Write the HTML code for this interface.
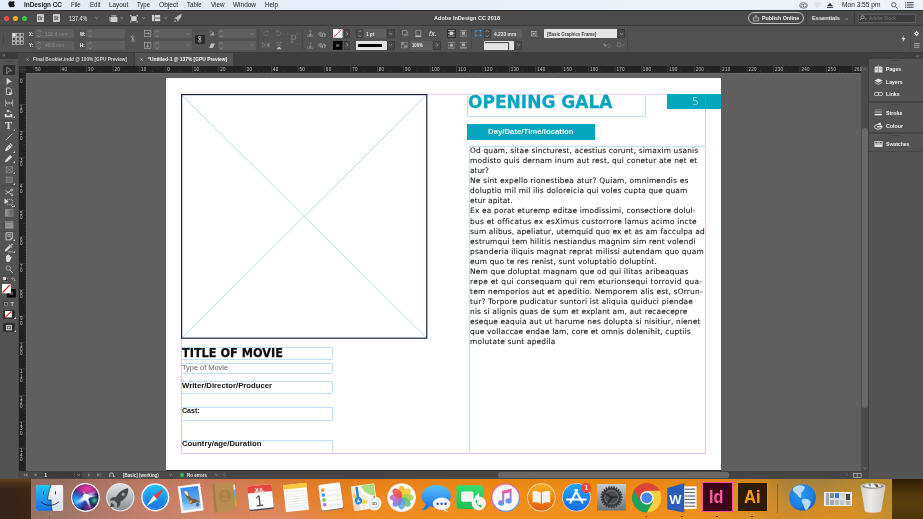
<!DOCTYPE html>
<html lang="en"><head><meta charset="utf-8"><title>InDesign CC - Untitled-1</title>
<style>
html,body{margin:0;padding:0;background:#2b1a0c;}
#root{position:relative;width:923px;height:519px;overflow:hidden;background:#535353;font-family:'Liberation Sans',sans-serif;will-change:transform;transform:translateZ(0);}
#root div,#root span,#root svg{box-sizing:border-box;}
svg{position:absolute;overflow:visible;}
</style></head><body><div id="root">
<div style="position:absolute;left:0px;top:478px;width:923px;height:41px;background:linear-gradient(90deg,#2e1c0e 0%,#3a2410 3%,#4a2f14 100%);"></div>
<div style="position:absolute;left:0px;top:0px;width:923px;height:10.4px;background:linear-gradient(90deg,#e3ebf8 0%,#e6edf8 40%,#edf1f8 70%,#eef2f9 100%);"></div>
<div style="position:absolute;left:0px;top:10.2px;width:923px;height:0.8px;background:#2c2c2c;"></div>
<div style="position:absolute;left:0px;top:10.8px;width:923px;height:14.4px;background:#4b4b4b;"></div>
<div style="position:absolute;left:0px;top:25px;width:923px;height:0.9px;background:#3a3a3a;"></div>
<div style="position:absolute;left:0px;top:25.8px;width:923px;height:26.4px;background:#525252;"></div>
<div style="position:absolute;left:0px;top:52px;width:923px;height:0.8px;background:#3c3c3c;"></div>
<div style="position:absolute;left:0px;top:52.6px;width:923px;height:13.6px;background:#3e3e3e;"></div>
<div style="position:absolute;left:19px;top:66px;width:850px;height:406px;background:#5f5f5f;"></div>
<div style="position:absolute;left:166px;top:78.3px;width:555px;height:391.3px;background:#fff;"></div>
<div style="position:absolute;left:166px;top:469.6px;width:555px;height:1.2px;background:#2a2a2a;"></div>
<div style="position:absolute;left:181.4px;top:93.8px;width:524px;height:0.7px;background:#f3cef7;"></div>
<div style="position:absolute;left:181.4px;top:453px;width:524px;height:0.7px;background:#e8bef7;"></div>
<div style="position:absolute;left:181.2px;top:94px;width:0.7px;height:359.5px;background:#e8bef7;"></div>
<div style="position:absolute;left:705px;top:94px;width:0.7px;height:359.5px;background:#e8bef7;"></div>
<svg style="left:181.4px;top:94px" width="246.4" height="244.8" viewBox="0 0 246.4 244.8"><line x1="1" y1="1" x2="245.4" y2="243.8" stroke="#a6d4f6" stroke-width="0.8"/><line x1="245.4" y1="1" x2="1" y2="243.8" stroke="#a6d4f6" stroke-width="0.8"/><rect x="0.6" y="0.6" width="245.2" height="243.6" fill="none" stroke="#1c2548" stroke-width="1.2"/></svg>
<div style="position:absolute;left:181.8px;top:346.75px;width:150.5px;height:0.7px;background:#c0e0f9;"></div>
<div style="position:absolute;left:181.8px;top:358.84999999999997px;width:150.5px;height:0.7px;background:#c0e0f9;"></div>
<div style="position:absolute;left:331.95px;top:347.1px;width:0.7px;height:12.099999999999966px;background:#c0e0f9;"></div>
<div style="position:absolute;left:181.8px;top:362.75px;width:150.5px;height:0.7px;background:#c0e0f9;"></div>
<div style="position:absolute;left:181.8px;top:373.04999999999995px;width:150.5px;height:0.7px;background:#c0e0f9;"></div>
<div style="position:absolute;left:331.95px;top:363.1px;width:0.7px;height:10.299999999999955px;background:#c0e0f9;"></div>
<div style="position:absolute;left:181.8px;top:380.75px;width:150.5px;height:0.7px;background:#c0e0f9;"></div>
<div style="position:absolute;left:181.8px;top:393.04999999999995px;width:150.5px;height:0.7px;background:#c0e0f9;"></div>
<div style="position:absolute;left:331.95px;top:381.1px;width:0.7px;height:12.299999999999955px;background:#c0e0f9;"></div>
<div style="position:absolute;left:181.8px;top:406.75px;width:150.5px;height:0.7px;background:#c0e0f9;"></div>
<div style="position:absolute;left:181.8px;top:419.75px;width:150.5px;height:0.7px;background:#c0e0f9;"></div>
<div style="position:absolute;left:331.95px;top:407.1px;width:0.7px;height:13.0px;background:#c0e0f9;"></div>
<div style="position:absolute;left:181.8px;top:439.84999999999997px;width:150.5px;height:0.7px;background:#c0e0f9;"></div>
<div style="position:absolute;left:331.95px;top:440.2px;width:0.7px;height:12.800000000000011px;background:#c0e0f9;"></div>
<div style="position:absolute;left:467.3px;top:115.65px;width:178.40000000000003px;height:0.7px;background:#c0e0f9;"></div>
<div style="position:absolute;left:466.95px;top:94.4px;width:0.7px;height:21.599999999999994px;background:#c0e0f9;"></div>
<div style="position:absolute;left:645.35px;top:94.4px;width:0.7px;height:21.599999999999994px;background:#c0e0f9;"></div>
<div style="position:absolute;left:469.5px;top:145.85px;width:235.70000000000005px;height:0.7px;background:#c0e0f9;"></div>
<div style="position:absolute;left:469.15px;top:146.2px;width:0.7px;height:306.8px;background:#c0e0f9;"></div>
<div style="position:absolute;left:467.2px;top:124.2px;width:127.4px;height:15.4px;background:#06a6be;"></div>
<div style="position:absolute;left:667px;top:94px;width:54px;height:14.7px;background:#06a6be;"></div>
<div style="position:absolute;left:705px;top:94px;width:0.7px;height:14.7px;background:#3f92d6;"></div>
<div style="position:absolute;left:19px;top:66px;width:842.3px;height:7px;background:#222222;"></div>
<div style="position:absolute;left:19px;top:72.8px;width:842.3px;height:0.8px;background:#6a6a6a;"></div>
<div style="position:absolute;left:19px;top:66px;width:6.7px;height:405.4px;background:#222222;"></div>
<div style="position:absolute;left:25.7px;top:73px;width:0.7px;height:398.4px;background:#6a6a6a;"></div>
<div style="position:absolute;left:19px;top:66px;width:6.7px;height:7px;background:#2a2a2a;"></div>
<div style="position:absolute;left:19.5px;top:69.3px;width:6px;height:0.5px;background:#3c3c3c;"></div>
<div style="position:absolute;left:22.2px;top:66.5px;width:0.5px;height:6.2px;background:#3c3c3c;"></div>
<svg style="left:0;top:0" width="923" height="519" viewBox="0 0 923 519"><rect x="33.45" y="66" width="0.7" height="6.8" fill="#4c4c4c"/><rect x="36.14" y="71.80" width="0.6" height="1.0" fill="#484848"/><rect x="38.78" y="71.80" width="0.6" height="1.0" fill="#484848"/><rect x="41.43" y="71.80" width="0.6" height="1.0" fill="#484848"/><rect x="44.07" y="71.80" width="0.6" height="1.0" fill="#484848"/><rect x="46.71" y="70.60" width="0.6" height="2.2" fill="#484848"/><rect x="49.35" y="71.80" width="0.6" height="1.0" fill="#484848"/><rect x="51.99" y="71.80" width="0.6" height="1.0" fill="#484848"/><rect x="54.64" y="71.80" width="0.6" height="1.0" fill="#484848"/><rect x="57.28" y="71.80" width="0.6" height="1.0" fill="#484848"/><rect x="59.87" y="66" width="0.7" height="6.8" fill="#4c4c4c"/><rect x="62.56" y="71.80" width="0.6" height="1.0" fill="#484848"/><rect x="65.20" y="71.80" width="0.6" height="1.0" fill="#484848"/><rect x="67.85" y="71.80" width="0.6" height="1.0" fill="#484848"/><rect x="70.49" y="71.80" width="0.6" height="1.0" fill="#484848"/><rect x="73.13" y="70.60" width="0.6" height="2.2" fill="#484848"/><rect x="75.77" y="71.80" width="0.6" height="1.0" fill="#484848"/><rect x="78.41" y="71.80" width="0.6" height="1.0" fill="#484848"/><rect x="81.06" y="71.80" width="0.6" height="1.0" fill="#484848"/><rect x="83.70" y="71.80" width="0.6" height="1.0" fill="#484848"/><rect x="86.29" y="66" width="0.7" height="6.8" fill="#4c4c4c"/><rect x="88.98" y="71.80" width="0.6" height="1.0" fill="#484848"/><rect x="91.62" y="71.80" width="0.6" height="1.0" fill="#484848"/><rect x="94.27" y="71.80" width="0.6" height="1.0" fill="#484848"/><rect x="96.91" y="71.80" width="0.6" height="1.0" fill="#484848"/><rect x="99.55" y="70.60" width="0.6" height="2.2" fill="#484848"/><rect x="102.19" y="71.80" width="0.6" height="1.0" fill="#484848"/><rect x="104.83" y="71.80" width="0.6" height="1.0" fill="#484848"/><rect x="107.48" y="71.80" width="0.6" height="1.0" fill="#484848"/><rect x="110.12" y="71.80" width="0.6" height="1.0" fill="#484848"/><rect x="112.71" y="66" width="0.7" height="6.8" fill="#4c4c4c"/><rect x="115.40" y="71.80" width="0.6" height="1.0" fill="#484848"/><rect x="118.04" y="71.80" width="0.6" height="1.0" fill="#484848"/><rect x="120.69" y="71.80" width="0.6" height="1.0" fill="#484848"/><rect x="123.33" y="71.80" width="0.6" height="1.0" fill="#484848"/><rect x="125.97" y="70.60" width="0.6" height="2.2" fill="#484848"/><rect x="128.61" y="71.80" width="0.6" height="1.0" fill="#484848"/><rect x="131.25" y="71.80" width="0.6" height="1.0" fill="#484848"/><rect x="133.90" y="71.80" width="0.6" height="1.0" fill="#484848"/><rect x="136.54" y="71.80" width="0.6" height="1.0" fill="#484848"/><rect x="139.13" y="66" width="0.7" height="6.8" fill="#4c4c4c"/><rect x="141.82" y="71.80" width="0.6" height="1.0" fill="#484848"/><rect x="144.46" y="71.80" width="0.6" height="1.0" fill="#484848"/><rect x="147.11" y="71.80" width="0.6" height="1.0" fill="#484848"/><rect x="149.75" y="71.80" width="0.6" height="1.0" fill="#484848"/><rect x="152.39" y="70.60" width="0.6" height="2.2" fill="#484848"/><rect x="155.03" y="71.80" width="0.6" height="1.0" fill="#484848"/><rect x="157.67" y="71.80" width="0.6" height="1.0" fill="#484848"/><rect x="160.32" y="71.80" width="0.6" height="1.0" fill="#484848"/><rect x="162.96" y="71.80" width="0.6" height="1.0" fill="#484848"/><rect x="165.55" y="66" width="0.7" height="6.8" fill="#4c4c4c"/><rect x="168.24" y="71.80" width="0.6" height="1.0" fill="#484848"/><rect x="170.88" y="71.80" width="0.6" height="1.0" fill="#484848"/><rect x="173.53" y="71.80" width="0.6" height="1.0" fill="#484848"/><rect x="176.17" y="71.80" width="0.6" height="1.0" fill="#484848"/><rect x="178.81" y="70.60" width="0.6" height="2.2" fill="#484848"/><rect x="181.45" y="71.80" width="0.6" height="1.0" fill="#484848"/><rect x="184.09" y="71.80" width="0.6" height="1.0" fill="#484848"/><rect x="186.74" y="71.80" width="0.6" height="1.0" fill="#484848"/><rect x="189.38" y="71.80" width="0.6" height="1.0" fill="#484848"/><rect x="191.97" y="66" width="0.7" height="6.8" fill="#4c4c4c"/><rect x="194.66" y="71.80" width="0.6" height="1.0" fill="#484848"/><rect x="197.30" y="71.80" width="0.6" height="1.0" fill="#484848"/><rect x="199.95" y="71.80" width="0.6" height="1.0" fill="#484848"/><rect x="202.59" y="71.80" width="0.6" height="1.0" fill="#484848"/><rect x="205.23" y="70.60" width="0.6" height="2.2" fill="#484848"/><rect x="207.87" y="71.80" width="0.6" height="1.0" fill="#484848"/><rect x="210.51" y="71.80" width="0.6" height="1.0" fill="#484848"/><rect x="213.16" y="71.80" width="0.6" height="1.0" fill="#484848"/><rect x="215.80" y="71.80" width="0.6" height="1.0" fill="#484848"/><rect x="218.39" y="66" width="0.7" height="6.8" fill="#4c4c4c"/><rect x="221.08" y="71.80" width="0.6" height="1.0" fill="#484848"/><rect x="223.72" y="71.80" width="0.6" height="1.0" fill="#484848"/><rect x="226.37" y="71.80" width="0.6" height="1.0" fill="#484848"/><rect x="229.01" y="71.80" width="0.6" height="1.0" fill="#484848"/><rect x="231.65" y="70.60" width="0.6" height="2.2" fill="#484848"/><rect x="234.29" y="71.80" width="0.6" height="1.0" fill="#484848"/><rect x="236.93" y="71.80" width="0.6" height="1.0" fill="#484848"/><rect x="239.58" y="71.80" width="0.6" height="1.0" fill="#484848"/><rect x="242.22" y="71.80" width="0.6" height="1.0" fill="#484848"/><rect x="244.81" y="66" width="0.7" height="6.8" fill="#4c4c4c"/><rect x="247.50" y="71.80" width="0.6" height="1.0" fill="#484848"/><rect x="250.14" y="71.80" width="0.6" height="1.0" fill="#484848"/><rect x="252.79" y="71.80" width="0.6" height="1.0" fill="#484848"/><rect x="255.43" y="71.80" width="0.6" height="1.0" fill="#484848"/><rect x="258.07" y="70.60" width="0.6" height="2.2" fill="#484848"/><rect x="260.71" y="71.80" width="0.6" height="1.0" fill="#484848"/><rect x="263.35" y="71.80" width="0.6" height="1.0" fill="#484848"/><rect x="266.00" y="71.80" width="0.6" height="1.0" fill="#484848"/><rect x="268.64" y="71.80" width="0.6" height="1.0" fill="#484848"/><rect x="271.23" y="66" width="0.7" height="6.8" fill="#4c4c4c"/><rect x="273.92" y="71.80" width="0.6" height="1.0" fill="#484848"/><rect x="276.56" y="71.80" width="0.6" height="1.0" fill="#484848"/><rect x="279.21" y="71.80" width="0.6" height="1.0" fill="#484848"/><rect x="281.85" y="71.80" width="0.6" height="1.0" fill="#484848"/><rect x="284.49" y="70.60" width="0.6" height="2.2" fill="#484848"/><rect x="287.13" y="71.80" width="0.6" height="1.0" fill="#484848"/><rect x="289.77" y="71.80" width="0.6" height="1.0" fill="#484848"/><rect x="292.42" y="71.80" width="0.6" height="1.0" fill="#484848"/><rect x="295.06" y="71.80" width="0.6" height="1.0" fill="#484848"/><rect x="297.65" y="66" width="0.7" height="6.8" fill="#4c4c4c"/><rect x="300.34" y="71.80" width="0.6" height="1.0" fill="#484848"/><rect x="302.98" y="71.80" width="0.6" height="1.0" fill="#484848"/><rect x="305.63" y="71.80" width="0.6" height="1.0" fill="#484848"/><rect x="308.27" y="71.80" width="0.6" height="1.0" fill="#484848"/><rect x="310.91" y="70.60" width="0.6" height="2.2" fill="#484848"/><rect x="313.55" y="71.80" width="0.6" height="1.0" fill="#484848"/><rect x="316.19" y="71.80" width="0.6" height="1.0" fill="#484848"/><rect x="318.84" y="71.80" width="0.6" height="1.0" fill="#484848"/><rect x="321.48" y="71.80" width="0.6" height="1.0" fill="#484848"/><rect x="324.07" y="66" width="0.7" height="6.8" fill="#4c4c4c"/><rect x="326.76" y="71.80" width="0.6" height="1.0" fill="#484848"/><rect x="329.40" y="71.80" width="0.6" height="1.0" fill="#484848"/><rect x="332.05" y="71.80" width="0.6" height="1.0" fill="#484848"/><rect x="334.69" y="71.80" width="0.6" height="1.0" fill="#484848"/><rect x="337.33" y="70.60" width="0.6" height="2.2" fill="#484848"/><rect x="339.97" y="71.80" width="0.6" height="1.0" fill="#484848"/><rect x="342.61" y="71.80" width="0.6" height="1.0" fill="#484848"/><rect x="345.26" y="71.80" width="0.6" height="1.0" fill="#484848"/><rect x="347.90" y="71.80" width="0.6" height="1.0" fill="#484848"/><rect x="350.49" y="66" width="0.7" height="6.8" fill="#4c4c4c"/><rect x="353.18" y="71.80" width="0.6" height="1.0" fill="#484848"/><rect x="355.82" y="71.80" width="0.6" height="1.0" fill="#484848"/><rect x="358.47" y="71.80" width="0.6" height="1.0" fill="#484848"/><rect x="361.11" y="71.80" width="0.6" height="1.0" fill="#484848"/><rect x="363.75" y="70.60" width="0.6" height="2.2" fill="#484848"/><rect x="366.39" y="71.80" width="0.6" height="1.0" fill="#484848"/><rect x="369.03" y="71.80" width="0.6" height="1.0" fill="#484848"/><rect x="371.68" y="71.80" width="0.6" height="1.0" fill="#484848"/><rect x="374.32" y="71.80" width="0.6" height="1.0" fill="#484848"/><rect x="376.91" y="66" width="0.7" height="6.8" fill="#4c4c4c"/><rect x="379.60" y="71.80" width="0.6" height="1.0" fill="#484848"/><rect x="382.24" y="71.80" width="0.6" height="1.0" fill="#484848"/><rect x="384.89" y="71.80" width="0.6" height="1.0" fill="#484848"/><rect x="387.53" y="71.80" width="0.6" height="1.0" fill="#484848"/><rect x="390.17" y="70.60" width="0.6" height="2.2" fill="#484848"/><rect x="392.81" y="71.80" width="0.6" height="1.0" fill="#484848"/><rect x="395.45" y="71.80" width="0.6" height="1.0" fill="#484848"/><rect x="398.10" y="71.80" width="0.6" height="1.0" fill="#484848"/><rect x="400.74" y="71.80" width="0.6" height="1.0" fill="#484848"/><rect x="403.33" y="66" width="0.7" height="6.8" fill="#4c4c4c"/><rect x="406.02" y="71.80" width="0.6" height="1.0" fill="#484848"/><rect x="408.66" y="71.80" width="0.6" height="1.0" fill="#484848"/><rect x="411.31" y="71.80" width="0.6" height="1.0" fill="#484848"/><rect x="413.95" y="71.80" width="0.6" height="1.0" fill="#484848"/><rect x="416.59" y="70.60" width="0.6" height="2.2" fill="#484848"/><rect x="419.23" y="71.80" width="0.6" height="1.0" fill="#484848"/><rect x="421.87" y="71.80" width="0.6" height="1.0" fill="#484848"/><rect x="424.52" y="71.80" width="0.6" height="1.0" fill="#484848"/><rect x="427.16" y="71.80" width="0.6" height="1.0" fill="#484848"/><rect x="429.75" y="66" width="0.7" height="6.8" fill="#4c4c4c"/><rect x="432.44" y="71.80" width="0.6" height="1.0" fill="#484848"/><rect x="435.08" y="71.80" width="0.6" height="1.0" fill="#484848"/><rect x="437.73" y="71.80" width="0.6" height="1.0" fill="#484848"/><rect x="440.37" y="71.80" width="0.6" height="1.0" fill="#484848"/><rect x="443.01" y="70.60" width="0.6" height="2.2" fill="#484848"/><rect x="445.65" y="71.80" width="0.6" height="1.0" fill="#484848"/><rect x="448.29" y="71.80" width="0.6" height="1.0" fill="#484848"/><rect x="450.94" y="71.80" width="0.6" height="1.0" fill="#484848"/><rect x="453.58" y="71.80" width="0.6" height="1.0" fill="#484848"/><rect x="456.17" y="66" width="0.7" height="6.8" fill="#4c4c4c"/><rect x="458.86" y="71.80" width="0.6" height="1.0" fill="#484848"/><rect x="461.50" y="71.80" width="0.6" height="1.0" fill="#484848"/><rect x="464.15" y="71.80" width="0.6" height="1.0" fill="#484848"/><rect x="466.79" y="71.80" width="0.6" height="1.0" fill="#484848"/><rect x="469.43" y="70.60" width="0.6" height="2.2" fill="#484848"/><rect x="472.07" y="71.80" width="0.6" height="1.0" fill="#484848"/><rect x="474.71" y="71.80" width="0.6" height="1.0" fill="#484848"/><rect x="477.36" y="71.80" width="0.6" height="1.0" fill="#484848"/><rect x="480.00" y="71.80" width="0.6" height="1.0" fill="#484848"/><rect x="482.59" y="66" width="0.7" height="6.8" fill="#4c4c4c"/><rect x="485.28" y="71.80" width="0.6" height="1.0" fill="#484848"/><rect x="487.92" y="71.80" width="0.6" height="1.0" fill="#484848"/><rect x="490.57" y="71.80" width="0.6" height="1.0" fill="#484848"/><rect x="493.21" y="71.80" width="0.6" height="1.0" fill="#484848"/><rect x="495.85" y="70.60" width="0.6" height="2.2" fill="#484848"/><rect x="498.49" y="71.80" width="0.6" height="1.0" fill="#484848"/><rect x="501.13" y="71.80" width="0.6" height="1.0" fill="#484848"/><rect x="503.78" y="71.80" width="0.6" height="1.0" fill="#484848"/><rect x="506.42" y="71.80" width="0.6" height="1.0" fill="#484848"/><rect x="509.01" y="66" width="0.7" height="6.8" fill="#4c4c4c"/><rect x="511.70" y="71.80" width="0.6" height="1.0" fill="#484848"/><rect x="514.34" y="71.80" width="0.6" height="1.0" fill="#484848"/><rect x="516.99" y="71.80" width="0.6" height="1.0" fill="#484848"/><rect x="519.63" y="71.80" width="0.6" height="1.0" fill="#484848"/><rect x="522.27" y="70.60" width="0.6" height="2.2" fill="#484848"/><rect x="524.91" y="71.80" width="0.6" height="1.0" fill="#484848"/><rect x="527.55" y="71.80" width="0.6" height="1.0" fill="#484848"/><rect x="530.20" y="71.80" width="0.6" height="1.0" fill="#484848"/><rect x="532.84" y="71.80" width="0.6" height="1.0" fill="#484848"/><rect x="535.43" y="66" width="0.7" height="6.8" fill="#4c4c4c"/><rect x="538.12" y="71.80" width="0.6" height="1.0" fill="#484848"/><rect x="540.76" y="71.80" width="0.6" height="1.0" fill="#484848"/><rect x="543.41" y="71.80" width="0.6" height="1.0" fill="#484848"/><rect x="546.05" y="71.80" width="0.6" height="1.0" fill="#484848"/><rect x="548.69" y="70.60" width="0.6" height="2.2" fill="#484848"/><rect x="551.33" y="71.80" width="0.6" height="1.0" fill="#484848"/><rect x="553.97" y="71.80" width="0.6" height="1.0" fill="#484848"/><rect x="556.62" y="71.80" width="0.6" height="1.0" fill="#484848"/><rect x="559.26" y="71.80" width="0.6" height="1.0" fill="#484848"/><rect x="561.85" y="66" width="0.7" height="6.8" fill="#4c4c4c"/><rect x="564.54" y="71.80" width="0.6" height="1.0" fill="#484848"/><rect x="567.18" y="71.80" width="0.6" height="1.0" fill="#484848"/><rect x="569.83" y="71.80" width="0.6" height="1.0" fill="#484848"/><rect x="572.47" y="71.80" width="0.6" height="1.0" fill="#484848"/><rect x="575.11" y="70.60" width="0.6" height="2.2" fill="#484848"/><rect x="577.75" y="71.80" width="0.6" height="1.0" fill="#484848"/><rect x="580.39" y="71.80" width="0.6" height="1.0" fill="#484848"/><rect x="583.04" y="71.80" width="0.6" height="1.0" fill="#484848"/><rect x="585.68" y="71.80" width="0.6" height="1.0" fill="#484848"/><rect x="588.27" y="66" width="0.7" height="6.8" fill="#4c4c4c"/><rect x="590.96" y="71.80" width="0.6" height="1.0" fill="#484848"/><rect x="593.60" y="71.80" width="0.6" height="1.0" fill="#484848"/><rect x="596.25" y="71.80" width="0.6" height="1.0" fill="#484848"/><rect x="598.89" y="71.80" width="0.6" height="1.0" fill="#484848"/><rect x="601.53" y="70.60" width="0.6" height="2.2" fill="#484848"/><rect x="604.17" y="71.80" width="0.6" height="1.0" fill="#484848"/><rect x="606.81" y="71.80" width="0.6" height="1.0" fill="#484848"/><rect x="609.46" y="71.80" width="0.6" height="1.0" fill="#484848"/><rect x="612.10" y="71.80" width="0.6" height="1.0" fill="#484848"/><rect x="614.69" y="66" width="0.7" height="6.8" fill="#4c4c4c"/><rect x="617.38" y="71.80" width="0.6" height="1.0" fill="#484848"/><rect x="620.02" y="71.80" width="0.6" height="1.0" fill="#484848"/><rect x="622.67" y="71.80" width="0.6" height="1.0" fill="#484848"/><rect x="625.31" y="71.80" width="0.6" height="1.0" fill="#484848"/><rect x="627.95" y="70.60" width="0.6" height="2.2" fill="#484848"/><rect x="630.59" y="71.80" width="0.6" height="1.0" fill="#484848"/><rect x="633.23" y="71.80" width="0.6" height="1.0" fill="#484848"/><rect x="635.88" y="71.80" width="0.6" height="1.0" fill="#484848"/><rect x="638.52" y="71.80" width="0.6" height="1.0" fill="#484848"/><rect x="641.11" y="66" width="0.7" height="6.8" fill="#4c4c4c"/><rect x="643.80" y="71.80" width="0.6" height="1.0" fill="#484848"/><rect x="646.44" y="71.80" width="0.6" height="1.0" fill="#484848"/><rect x="649.09" y="71.80" width="0.6" height="1.0" fill="#484848"/><rect x="651.73" y="71.80" width="0.6" height="1.0" fill="#484848"/><rect x="654.37" y="70.60" width="0.6" height="2.2" fill="#484848"/><rect x="657.01" y="71.80" width="0.6" height="1.0" fill="#484848"/><rect x="659.65" y="71.80" width="0.6" height="1.0" fill="#484848"/><rect x="662.30" y="71.80" width="0.6" height="1.0" fill="#484848"/><rect x="664.94" y="71.80" width="0.6" height="1.0" fill="#484848"/><rect x="667.53" y="66" width="0.7" height="6.8" fill="#4c4c4c"/><rect x="670.22" y="71.80" width="0.6" height="1.0" fill="#484848"/><rect x="672.86" y="71.80" width="0.6" height="1.0" fill="#484848"/><rect x="675.51" y="71.80" width="0.6" height="1.0" fill="#484848"/><rect x="678.15" y="71.80" width="0.6" height="1.0" fill="#484848"/><rect x="680.79" y="70.60" width="0.6" height="2.2" fill="#484848"/><rect x="683.43" y="71.80" width="0.6" height="1.0" fill="#484848"/><rect x="686.07" y="71.80" width="0.6" height="1.0" fill="#484848"/><rect x="688.72" y="71.80" width="0.6" height="1.0" fill="#484848"/><rect x="691.36" y="71.80" width="0.6" height="1.0" fill="#484848"/><rect x="693.95" y="66" width="0.7" height="6.8" fill="#4c4c4c"/><rect x="696.64" y="71.80" width="0.6" height="1.0" fill="#484848"/><rect x="699.28" y="71.80" width="0.6" height="1.0" fill="#484848"/><rect x="701.93" y="71.80" width="0.6" height="1.0" fill="#484848"/><rect x="704.57" y="71.80" width="0.6" height="1.0" fill="#484848"/><rect x="707.21" y="70.60" width="0.6" height="2.2" fill="#484848"/><rect x="709.85" y="71.80" width="0.6" height="1.0" fill="#484848"/><rect x="712.49" y="71.80" width="0.6" height="1.0" fill="#484848"/><rect x="715.14" y="71.80" width="0.6" height="1.0" fill="#484848"/><rect x="717.78" y="71.80" width="0.6" height="1.0" fill="#484848"/><rect x="720.37" y="66" width="0.7" height="6.8" fill="#4c4c4c"/><rect x="723.06" y="71.80" width="0.6" height="1.0" fill="#484848"/><rect x="725.70" y="71.80" width="0.6" height="1.0" fill="#484848"/><rect x="728.35" y="71.80" width="0.6" height="1.0" fill="#484848"/><rect x="730.99" y="71.80" width="0.6" height="1.0" fill="#484848"/><rect x="733.63" y="70.60" width="0.6" height="2.2" fill="#484848"/><rect x="736.27" y="71.80" width="0.6" height="1.0" fill="#484848"/><rect x="738.91" y="71.80" width="0.6" height="1.0" fill="#484848"/><rect x="741.56" y="71.80" width="0.6" height="1.0" fill="#484848"/><rect x="744.20" y="71.80" width="0.6" height="1.0" fill="#484848"/><rect x="746.79" y="66" width="0.7" height="6.8" fill="#4c4c4c"/><rect x="749.48" y="71.80" width="0.6" height="1.0" fill="#484848"/><rect x="752.12" y="71.80" width="0.6" height="1.0" fill="#484848"/><rect x="754.77" y="71.80" width="0.6" height="1.0" fill="#484848"/><rect x="757.41" y="71.80" width="0.6" height="1.0" fill="#484848"/><rect x="760.05" y="70.60" width="0.6" height="2.2" fill="#484848"/><rect x="762.69" y="71.80" width="0.6" height="1.0" fill="#484848"/><rect x="765.33" y="71.80" width="0.6" height="1.0" fill="#484848"/><rect x="767.98" y="71.80" width="0.6" height="1.0" fill="#484848"/><rect x="770.62" y="71.80" width="0.6" height="1.0" fill="#484848"/><rect x="773.21" y="66" width="0.7" height="6.8" fill="#4c4c4c"/><rect x="775.90" y="71.80" width="0.6" height="1.0" fill="#484848"/><rect x="778.54" y="71.80" width="0.6" height="1.0" fill="#484848"/><rect x="781.19" y="71.80" width="0.6" height="1.0" fill="#484848"/><rect x="783.83" y="71.80" width="0.6" height="1.0" fill="#484848"/><rect x="786.47" y="70.60" width="0.6" height="2.2" fill="#484848"/><rect x="789.11" y="71.80" width="0.6" height="1.0" fill="#484848"/><rect x="791.75" y="71.80" width="0.6" height="1.0" fill="#484848"/><rect x="794.40" y="71.80" width="0.6" height="1.0" fill="#484848"/><rect x="797.04" y="71.80" width="0.6" height="1.0" fill="#484848"/><rect x="799.63" y="66" width="0.7" height="6.8" fill="#4c4c4c"/><rect x="802.32" y="71.80" width="0.6" height="1.0" fill="#484848"/><rect x="804.96" y="71.80" width="0.6" height="1.0" fill="#484848"/><rect x="807.61" y="71.80" width="0.6" height="1.0" fill="#484848"/><rect x="810.25" y="71.80" width="0.6" height="1.0" fill="#484848"/><rect x="812.89" y="70.60" width="0.6" height="2.2" fill="#484848"/><rect x="815.53" y="71.80" width="0.6" height="1.0" fill="#484848"/><rect x="818.17" y="71.80" width="0.6" height="1.0" fill="#484848"/><rect x="820.82" y="71.80" width="0.6" height="1.0" fill="#484848"/><rect x="823.46" y="71.80" width="0.6" height="1.0" fill="#484848"/><rect x="826.05" y="66" width="0.7" height="6.8" fill="#4c4c4c"/><rect x="828.74" y="71.80" width="0.6" height="1.0" fill="#484848"/><rect x="831.38" y="71.80" width="0.6" height="1.0" fill="#484848"/><rect x="834.03" y="71.80" width="0.6" height="1.0" fill="#484848"/><rect x="836.67" y="71.80" width="0.6" height="1.0" fill="#484848"/><rect x="839.31" y="70.60" width="0.6" height="2.2" fill="#484848"/><rect x="841.95" y="71.80" width="0.6" height="1.0" fill="#484848"/><rect x="844.59" y="71.80" width="0.6" height="1.0" fill="#484848"/><rect x="847.24" y="71.80" width="0.6" height="1.0" fill="#484848"/><rect x="849.88" y="71.80" width="0.6" height="1.0" fill="#484848"/><rect x="852.47" y="66" width="0.7" height="6.8" fill="#4c4c4c"/><rect x="855.16" y="71.80" width="0.6" height="1.0" fill="#484848"/><rect x="857.80" y="71.80" width="0.6" height="1.0" fill="#484848"/><rect x="860.45" y="71.80" width="0.6" height="1.0" fill="#484848"/><rect x="24.40" y="75.36" width="1.0" height="0.6" fill="#484848"/><rect x="19" y="77.95" width="6.4" height="0.7" fill="#4c4c4c"/><rect x="24.40" y="80.64" width="1.0" height="0.6" fill="#484848"/><rect x="24.40" y="83.28" width="1.0" height="0.6" fill="#484848"/><rect x="24.40" y="85.93" width="1.0" height="0.6" fill="#484848"/><rect x="24.40" y="88.57" width="1.0" height="0.6" fill="#484848"/><rect x="23.20" y="91.21" width="2.2" height="0.6" fill="#484848"/><rect x="24.40" y="93.85" width="1.0" height="0.6" fill="#484848"/><rect x="24.40" y="96.49" width="1.0" height="0.6" fill="#484848"/><rect x="24.40" y="99.14" width="1.0" height="0.6" fill="#484848"/><rect x="24.40" y="101.78" width="1.0" height="0.6" fill="#484848"/><rect x="19" y="104.37" width="6.4" height="0.7" fill="#4c4c4c"/><rect x="24.40" y="107.06" width="1.0" height="0.6" fill="#484848"/><rect x="24.40" y="109.70" width="1.0" height="0.6" fill="#484848"/><rect x="24.40" y="112.35" width="1.0" height="0.6" fill="#484848"/><rect x="24.40" y="114.99" width="1.0" height="0.6" fill="#484848"/><rect x="23.20" y="117.63" width="2.2" height="0.6" fill="#484848"/><rect x="24.40" y="120.27" width="1.0" height="0.6" fill="#484848"/><rect x="24.40" y="122.91" width="1.0" height="0.6" fill="#484848"/><rect x="24.40" y="125.56" width="1.0" height="0.6" fill="#484848"/><rect x="24.40" y="128.20" width="1.0" height="0.6" fill="#484848"/><rect x="19" y="130.79" width="6.4" height="0.7" fill="#4c4c4c"/><rect x="24.40" y="133.48" width="1.0" height="0.6" fill="#484848"/><rect x="24.40" y="136.12" width="1.0" height="0.6" fill="#484848"/><rect x="24.40" y="138.77" width="1.0" height="0.6" fill="#484848"/><rect x="24.40" y="141.41" width="1.0" height="0.6" fill="#484848"/><rect x="23.20" y="144.05" width="2.2" height="0.6" fill="#484848"/><rect x="24.40" y="146.69" width="1.0" height="0.6" fill="#484848"/><rect x="24.40" y="149.33" width="1.0" height="0.6" fill="#484848"/><rect x="24.40" y="151.98" width="1.0" height="0.6" fill="#484848"/><rect x="24.40" y="154.62" width="1.0" height="0.6" fill="#484848"/><rect x="19" y="157.21" width="6.4" height="0.7" fill="#4c4c4c"/><rect x="24.40" y="159.90" width="1.0" height="0.6" fill="#484848"/><rect x="24.40" y="162.54" width="1.0" height="0.6" fill="#484848"/><rect x="24.40" y="165.19" width="1.0" height="0.6" fill="#484848"/><rect x="24.40" y="167.83" width="1.0" height="0.6" fill="#484848"/><rect x="23.20" y="170.47" width="2.2" height="0.6" fill="#484848"/><rect x="24.40" y="173.11" width="1.0" height="0.6" fill="#484848"/><rect x="24.40" y="175.75" width="1.0" height="0.6" fill="#484848"/><rect x="24.40" y="178.40" width="1.0" height="0.6" fill="#484848"/><rect x="24.40" y="181.04" width="1.0" height="0.6" fill="#484848"/><rect x="19" y="183.63" width="6.4" height="0.7" fill="#4c4c4c"/><rect x="24.40" y="186.32" width="1.0" height="0.6" fill="#484848"/><rect x="24.40" y="188.96" width="1.0" height="0.6" fill="#484848"/><rect x="24.40" y="191.61" width="1.0" height="0.6" fill="#484848"/><rect x="24.40" y="194.25" width="1.0" height="0.6" fill="#484848"/><rect x="23.20" y="196.89" width="2.2" height="0.6" fill="#484848"/><rect x="24.40" y="199.53" width="1.0" height="0.6" fill="#484848"/><rect x="24.40" y="202.17" width="1.0" height="0.6" fill="#484848"/><rect x="24.40" y="204.82" width="1.0" height="0.6" fill="#484848"/><rect x="24.40" y="207.46" width="1.0" height="0.6" fill="#484848"/><rect x="19" y="210.05" width="6.4" height="0.7" fill="#4c4c4c"/><rect x="24.40" y="212.74" width="1.0" height="0.6" fill="#484848"/><rect x="24.40" y="215.38" width="1.0" height="0.6" fill="#484848"/><rect x="24.40" y="218.03" width="1.0" height="0.6" fill="#484848"/><rect x="24.40" y="220.67" width="1.0" height="0.6" fill="#484848"/><rect x="23.20" y="223.31" width="2.2" height="0.6" fill="#484848"/><rect x="24.40" y="225.95" width="1.0" height="0.6" fill="#484848"/><rect x="24.40" y="228.59" width="1.0" height="0.6" fill="#484848"/><rect x="24.40" y="231.24" width="1.0" height="0.6" fill="#484848"/><rect x="24.40" y="233.88" width="1.0" height="0.6" fill="#484848"/><rect x="19" y="236.47" width="6.4" height="0.7" fill="#4c4c4c"/><rect x="24.40" y="239.16" width="1.0" height="0.6" fill="#484848"/><rect x="24.40" y="241.80" width="1.0" height="0.6" fill="#484848"/><rect x="24.40" y="244.45" width="1.0" height="0.6" fill="#484848"/><rect x="24.40" y="247.09" width="1.0" height="0.6" fill="#484848"/><rect x="23.20" y="249.73" width="2.2" height="0.6" fill="#484848"/><rect x="24.40" y="252.37" width="1.0" height="0.6" fill="#484848"/><rect x="24.40" y="255.01" width="1.0" height="0.6" fill="#484848"/><rect x="24.40" y="257.66" width="1.0" height="0.6" fill="#484848"/><rect x="24.40" y="260.30" width="1.0" height="0.6" fill="#484848"/><rect x="19" y="262.89" width="6.4" height="0.7" fill="#4c4c4c"/><rect x="24.40" y="265.58" width="1.0" height="0.6" fill="#484848"/><rect x="24.40" y="268.22" width="1.0" height="0.6" fill="#484848"/><rect x="24.40" y="270.87" width="1.0" height="0.6" fill="#484848"/><rect x="24.40" y="273.51" width="1.0" height="0.6" fill="#484848"/><rect x="23.20" y="276.15" width="2.2" height="0.6" fill="#484848"/><rect x="24.40" y="278.79" width="1.0" height="0.6" fill="#484848"/><rect x="24.40" y="281.43" width="1.0" height="0.6" fill="#484848"/><rect x="24.40" y="284.08" width="1.0" height="0.6" fill="#484848"/><rect x="24.40" y="286.72" width="1.0" height="0.6" fill="#484848"/><rect x="19" y="289.31" width="6.4" height="0.7" fill="#4c4c4c"/><rect x="24.40" y="292.00" width="1.0" height="0.6" fill="#484848"/><rect x="24.40" y="294.64" width="1.0" height="0.6" fill="#484848"/><rect x="24.40" y="297.29" width="1.0" height="0.6" fill="#484848"/><rect x="24.40" y="299.93" width="1.0" height="0.6" fill="#484848"/><rect x="23.20" y="302.57" width="2.2" height="0.6" fill="#484848"/><rect x="24.40" y="305.21" width="1.0" height="0.6" fill="#484848"/><rect x="24.40" y="307.85" width="1.0" height="0.6" fill="#484848"/><rect x="24.40" y="310.50" width="1.0" height="0.6" fill="#484848"/><rect x="24.40" y="313.14" width="1.0" height="0.6" fill="#484848"/><rect x="19" y="315.73" width="6.4" height="0.7" fill="#4c4c4c"/><rect x="24.40" y="318.42" width="1.0" height="0.6" fill="#484848"/><rect x="24.40" y="321.06" width="1.0" height="0.6" fill="#484848"/><rect x="24.40" y="323.71" width="1.0" height="0.6" fill="#484848"/><rect x="24.40" y="326.35" width="1.0" height="0.6" fill="#484848"/><rect x="23.20" y="328.99" width="2.2" height="0.6" fill="#484848"/><rect x="24.40" y="331.63" width="1.0" height="0.6" fill="#484848"/><rect x="24.40" y="334.27" width="1.0" height="0.6" fill="#484848"/><rect x="24.40" y="336.92" width="1.0" height="0.6" fill="#484848"/><rect x="24.40" y="339.56" width="1.0" height="0.6" fill="#484848"/><rect x="19" y="342.15" width="6.4" height="0.7" fill="#4c4c4c"/><rect x="24.40" y="344.84" width="1.0" height="0.6" fill="#484848"/><rect x="24.40" y="347.48" width="1.0" height="0.6" fill="#484848"/><rect x="24.40" y="350.13" width="1.0" height="0.6" fill="#484848"/><rect x="24.40" y="352.77" width="1.0" height="0.6" fill="#484848"/><rect x="23.20" y="355.41" width="2.2" height="0.6" fill="#484848"/><rect x="24.40" y="358.05" width="1.0" height="0.6" fill="#484848"/><rect x="24.40" y="360.69" width="1.0" height="0.6" fill="#484848"/><rect x="24.40" y="363.34" width="1.0" height="0.6" fill="#484848"/><rect x="24.40" y="365.98" width="1.0" height="0.6" fill="#484848"/><rect x="19" y="368.57" width="6.4" height="0.7" fill="#4c4c4c"/><rect x="24.40" y="371.26" width="1.0" height="0.6" fill="#484848"/><rect x="24.40" y="373.90" width="1.0" height="0.6" fill="#484848"/><rect x="24.40" y="376.55" width="1.0" height="0.6" fill="#484848"/><rect x="24.40" y="379.19" width="1.0" height="0.6" fill="#484848"/><rect x="23.20" y="381.83" width="2.2" height="0.6" fill="#484848"/><rect x="24.40" y="384.47" width="1.0" height="0.6" fill="#484848"/><rect x="24.40" y="387.11" width="1.0" height="0.6" fill="#484848"/><rect x="24.40" y="389.76" width="1.0" height="0.6" fill="#484848"/><rect x="24.40" y="392.40" width="1.0" height="0.6" fill="#484848"/><rect x="19" y="394.99" width="6.4" height="0.7" fill="#4c4c4c"/><rect x="24.40" y="397.68" width="1.0" height="0.6" fill="#484848"/><rect x="24.40" y="400.32" width="1.0" height="0.6" fill="#484848"/><rect x="24.40" y="402.97" width="1.0" height="0.6" fill="#484848"/><rect x="24.40" y="405.61" width="1.0" height="0.6" fill="#484848"/><rect x="23.20" y="408.25" width="2.2" height="0.6" fill="#484848"/><rect x="24.40" y="410.89" width="1.0" height="0.6" fill="#484848"/><rect x="24.40" y="413.53" width="1.0" height="0.6" fill="#484848"/><rect x="24.40" y="416.18" width="1.0" height="0.6" fill="#484848"/><rect x="24.40" y="418.82" width="1.0" height="0.6" fill="#484848"/><rect x="19" y="421.41" width="6.4" height="0.7" fill="#4c4c4c"/><rect x="24.40" y="424.10" width="1.0" height="0.6" fill="#484848"/><rect x="24.40" y="426.74" width="1.0" height="0.6" fill="#484848"/><rect x="24.40" y="429.39" width="1.0" height="0.6" fill="#484848"/><rect x="24.40" y="432.03" width="1.0" height="0.6" fill="#484848"/><rect x="23.20" y="434.67" width="2.2" height="0.6" fill="#484848"/><rect x="24.40" y="437.31" width="1.0" height="0.6" fill="#484848"/><rect x="24.40" y="439.95" width="1.0" height="0.6" fill="#484848"/><rect x="24.40" y="442.60" width="1.0" height="0.6" fill="#484848"/><rect x="24.40" y="445.24" width="1.0" height="0.6" fill="#484848"/><rect x="19" y="447.83" width="6.4" height="0.7" fill="#4c4c4c"/><rect x="24.40" y="450.52" width="1.0" height="0.6" fill="#484848"/><rect x="24.40" y="453.16" width="1.0" height="0.6" fill="#484848"/><rect x="24.40" y="455.81" width="1.0" height="0.6" fill="#484848"/><rect x="24.40" y="458.45" width="1.0" height="0.6" fill="#484848"/><rect x="23.20" y="461.09" width="2.2" height="0.6" fill="#484848"/><rect x="24.40" y="463.73" width="1.0" height="0.6" fill="#484848"/><rect x="24.40" y="466.37" width="1.0" height="0.6" fill="#484848"/><rect x="24.40" y="469.02" width="1.0" height="0.6" fill="#484848"/></svg>
<svg style="left:10px;top:1.1px" width="5.4" height="6.6" viewBox="0 0 170 205"><path fill="#1a1a1a" d="M150 141c-3 9-7 17-12 25-7 10-13 17-17 21-7 6-14 10-22 10-6 0-12-2-20-5-8-3-15-5-22-5-7 0-14 2-22 5-8 3-15 5-20 5-8 0-15-3-23-10-5-4-11-12-18-22-8-11-14-24-19-38-5-16-8-31-8-45 0-17 4-31 11-43 6-10 13-17 22-23 9-6 19-8 30-9 6 0 14 2 23 5 10 4 16 5 19 5 2 0 9-2 21-6 11-4 21-6 29-5 22 2 38 10 49 26-19 12-29 28-29 49 0 16 6 30 18 41 5 5 11 9 18 12-1 4-3 8-5 12zM119 4c0 13-5 25-14 36-11 13-25 21-40 20 0-2 0-3 0-5 0-12 5-26 15-37 5-5 11-10 18-13 7-3 14-5 21-6 0 2 0 3 0 5z"/></svg>
<svg style="left:798.5px;top:1.5px" width="9" height="7" viewBox="0 0 18 14"><ellipse cx="9" cy="7" rx="8" ry="5.6" fill="none" stroke="#555" stroke-width="1.3"/><circle cx="6.5" cy="7.5" r="3" fill="none" stroke="#555" stroke-width="1.2"/><circle cx="11.5" cy="7" r="3.4" fill="none" stroke="#555" stroke-width="1.2"/></svg>
<svg style="left:813px;top:1.8px" width="8.4" height="6.4" viewBox="0 0 17 13"><path d="M1 4.5a11 11 0 0 1 15 0M3.5 7.3a7.5 7.5 0 0 1 10 0M6 10a4 4 0 0 1 5 0" fill="none" stroke="#c9cfd8" stroke-width="1.5"/><circle cx="8.5" cy="12" r="1" fill="#c9cfd8"/></svg>
<svg style="left:827.4px;top:2.6px" width="6" height="5" viewBox="0 0 12 10"><path d="M6 0L12 6H0z" fill="#333"/><rect x="0" y="7.6" width="12" height="2.2" fill="#333"/></svg>
<svg style="left:891px;top:1.8px" width="7" height="7" viewBox="0 0 14 14"><circle cx="5.6" cy="5.6" r="4.3" fill="none" stroke="#333" stroke-width="1.5"/><path d="M8.8 8.8L13 13" stroke="#333" stroke-width="1.7"/></svg>
<svg style="left:904.5px;top:2.2px" width="8.6" height="6" viewBox="0 0 17 12"><g fill="#3a3a3a"><rect x="0" y="0.5" width="2.2" height="2"/><rect x="3.6" y="0.5" width="13.4" height="2"/><rect x="0" y="5" width="2.2" height="2"/><rect x="3.6" y="5" width="13.4" height="2"/><rect x="0" y="9.5" width="2.2" height="2"/><rect x="3.6" y="9.5" width="13.4" height="2"/></g></svg>
<div style="position:absolute;left:3.7px;top:15.8px;width:5.6px;height:5.6px;border-radius:50%;background:#fc4a50;"></div>
<div style="position:absolute;left:5.8px;top:17.900000000000002px;width:1.4px;height:1.4px;border-radius:50%;background:rgba(0,0,0,0.45);"></div>
<div style="position:absolute;left:12.8px;top:15.8px;width:5.6px;height:5.6px;border-radius:50%;background:#fdb32c;"></div>
<div style="position:absolute;left:14.9px;top:17.900000000000002px;width:1.4px;height:1.4px;border-radius:50%;background:rgba(0,0,0,0.45);"></div>
<div style="position:absolute;left:21.8px;top:15.8px;width:5.6px;height:5.6px;border-radius:50%;background:#2ccb43;"></div>
<div style="position:absolute;left:23.900000000000002px;top:17.900000000000002px;width:1.4px;height:1.4px;border-radius:50%;background:rgba(0,0,0,0.45);"></div>
<div style="position:absolute;left:37px;top:14.4px;width:7.1px;height:7.2px;background:#c9c9c9;border-radius:0.6px;"></div>
<div style="position:absolute;left:53px;top:14.4px;width:7.1px;height:7.2px;background:#c9c9c9;border-radius:0.6px;"></div>
<svg style="left:95.0px;top:17.3px" width="3.4" height="2.0" viewBox="0 0 34 20"><path d="M3 3L17 16L31 3" fill="none" stroke="#cfcfcf" stroke-width="5"/></svg>
<svg style="left:108.8px;top:14.6px" width="8.8" height="7.4" viewBox="0 0 88 74"><g fill="#cfcfcf"><rect x="14" y="20" width="70" height="50"/><rect x="24" y="4" width="50" height="10"/><rect x="0" y="20" width="8" height="8"/><rect x="0" y="36" width="8" height="8"/><rect x="0" y="52" width="8" height="8"/></g></svg>
<svg style="left:120.0px;top:17.3px" width="3.4" height="2.0" viewBox="0 0 34 20"><path d="M3 3L17 16L31 3" fill="none" stroke="#cfcfcf" stroke-width="5"/></svg>
<svg style="left:130.4px;top:14.6px" width="7.8" height="7.4" viewBox="0 0 78 74"><g fill="#cfcfcf"><rect x="12" y="12" width="54" height="50"/><rect x="0" y="0" width="16" height="6"/><rect x="0" y="0" width="6" height="16"/><rect x="62" y="0" width="16" height="6"/><rect x="72" y="0" width="6" height="16"/><rect x="0" y="68" width="16" height="6"/><rect x="0" y="58" width="6" height="16"/><rect x="62" y="68" width="16" height="6"/><rect x="72" y="58" width="6" height="16"/></g></svg>
<svg style="left:141.70000000000002px;top:17.3px" width="3.4" height="2.0" viewBox="0 0 34 20"><path d="M3 3L17 16L31 3" fill="none" stroke="#cfcfcf" stroke-width="5"/></svg>
<svg style="left:151.8px;top:15.2px" width="8.2" height="6.2" viewBox="0 0 82 62"><g fill="#cfcfcf"><rect x="0" y="0" width="24" height="62"/><rect x="30" y="0" width="52" height="27"/><rect x="30" y="35" width="52" height="27"/></g></svg>
<svg style="left:163.5px;top:17.3px" width="3.4" height="2.0" viewBox="0 0 34 20"><path d="M3 3L17 16L31 3" fill="none" stroke="#cfcfcf" stroke-width="5"/></svg>
<svg style="left:174.2px;top:14px" width="8" height="8" viewBox="0 0 80 80"><path fill="#bdbdbd" d="M78 2C55 4 38 14 26 32L10 34L2 46L18 46L34 62L34 78L46 70L48 54C66 42 76 25 78 2z"/><path fill="#bdbdbd" d="M6 58L22 74L2 78z"/></svg>
<div style="position:absolute;left:748.1px;top:12px;width:55.8px;height:12px;border:0.9px solid #bdbdbd;border-radius:6px;"></div>
<svg style="left:753px;top:14.6px" width="6" height="6.4" viewBox="0 0 60 64"><path d="M16 26H4V60H56V26H44" fill="none" stroke="#e0e0e0" stroke-width="6"/><path d="M30 44V6M18 18L30 5L42 18" fill="none" stroke="#e0e0e0" stroke-width="6"/></svg>
<div style="position:absolute;left:806.3px;top:12px;width:0.7px;height:12px;background:#3a3a3a;"></div>
<svg style="left:844.5px;top:17.6px" width="3.4" height="2.0" viewBox="0 0 34 20"><path d="M3 3L17 16L31 3" fill="none" stroke="#cfcfcf" stroke-width="5"/></svg>
<div style="position:absolute;left:854.3px;top:12px;width:0.7px;height:12px;background:#3a3a3a;"></div>
<div style="position:absolute;left:857.5px;top:13.6px;width:58.5px;height:9px;background:#3d3d3d;border:0.8px solid #5e5e5e;border-radius:1px;"></div>
<svg style="left:859.6px;top:15.3px" width="7" height="5.6" viewBox="0 0 70 56"><circle cx="26" cy="22" r="15" fill="none" stroke="#d8d8d8" stroke-width="6"/><path d="M14 34L2 50" stroke="#d8d8d8" stroke-width="7"/><path d="M48 34L58 46L68 34" fill="none" stroke="#d8d8d8" stroke-width="5"/></svg>
<div style="position:absolute;left:2.6px;top:34px;width:1px;height:10px;background:repeating-linear-gradient(180deg,#3c3c3c 0,#3c3c3c 0.8px,transparent 0.8px,transparent 1.6px);"></div>
<svg style="left:12px;top:33px" width="12" height="12" viewBox="0 0 120 120"><rect x="4" y="4" width="30" height="30" fill="#f4f4f4" stroke="#d6d6d6" stroke-width="6"/><rect x="44" y="4" width="30" height="30" fill="none" stroke="#d6d6d6" stroke-width="6"/><rect x="84" y="4" width="30" height="30" fill="none" stroke="#d6d6d6" stroke-width="6"/><rect x="4" y="44" width="30" height="30" fill="none" stroke="#d6d6d6" stroke-width="6"/><rect x="44" y="44" width="30" height="30" fill="none" stroke="#d6d6d6" stroke-width="6"/><rect x="84" y="44" width="30" height="30" fill="none" stroke="#d6d6d6" stroke-width="6"/><rect x="4" y="84" width="30" height="30" fill="none" stroke="#d6d6d6" stroke-width="6"/><rect x="44" y="84" width="30" height="30" fill="none" stroke="#d6d6d6" stroke-width="6"/><rect x="84" y="84" width="30" height="30" fill="none" stroke="#d6d6d6" stroke-width="6"/></svg>
<div style="position:absolute;left:35.2px;top:29.25px;width:38.89999999999999px;height:8.7px;background:#5f5f5f;border-radius:0.8px;"></div>
<div style="position:absolute;left:35.2px;top:40.85px;width:38.89999999999999px;height:8.7px;background:#5f5f5f;border-radius:0.8px;"></div>
<svg style="left:36.9px;top:30.0px" width="4.2" height="7.2" viewBox="0 0 42 72"><path d="M4 17L21 4L38 17M4 55L21 68L38 55" fill="none" stroke="#a8a8a8" stroke-width="5"/></svg>
<svg style="left:36.9px;top:41.6px" width="4.2" height="7.2" viewBox="0 0 42 72"><path d="M4 17L21 4L38 17M4 55L21 68L38 55" fill="none" stroke="#a8a8a8" stroke-width="5"/></svg>
<div style="position:absolute;left:86.4px;top:29.25px;width:38.599999999999994px;height:8.7px;background:#5f5f5f;border-radius:0.8px;"></div>
<div style="position:absolute;left:86.4px;top:40.85px;width:38.599999999999994px;height:8.7px;background:#5f5f5f;border-radius:0.8px;"></div>
<svg style="left:88.2px;top:30.0px" width="4.2" height="7.2" viewBox="0 0 42 72"><path d="M4 17L21 4L38 17M4 55L21 68L38 55" fill="none" stroke="#a8a8a8" stroke-width="5"/></svg>
<svg style="left:88.2px;top:41.6px" width="4.2" height="7.2" viewBox="0 0 42 72"><path d="M4 17L21 4L38 17M4 55L21 68L38 55" fill="none" stroke="#a8a8a8" stroke-width="5"/></svg>
<svg style="left:130.4px;top:35px" width="5.4" height="7.4" viewBox="0 0 54 74"><g fill="none" stroke="#a8a8a8" stroke-width="6"><rect x="16" y="6" width="22" height="26" rx="10"/><rect x="16" y="42" width="22" height="26" rx="10"/><path d="M27 20V54"/><path d="M4 8L50 66" stroke-width="5"/></g></svg>
<svg style="left:143.9px;top:30.200000000000003px" width="7.2" height="6.8" viewBox="0 0 72 68"><rect x="3" y="3" width="66" height="62" fill="none" stroke="#c8c8c8" stroke-width="5"/><path d="M14 34H52M40 22L54 34L40 46" fill="none" stroke="#c8c8c8" stroke-width="6"/></svg>
<svg style="left:143.9px;top:41.800000000000004px" width="7.2" height="6.8" viewBox="0 0 72 68"><rect x="3" y="3" width="66" height="62" fill="none" stroke="#c8c8c8" stroke-width="5"/><path d="M36 12V52M24 40L36 54L48 40" fill="none" stroke="#c8c8c8" stroke-width="6"/></svg>
<div style="position:absolute;left:153px;top:29.25px;width:38.80000000000001px;height:8.7px;background:#5f5f5f;border-radius:0.8px;"></div>
<div style="position:absolute;left:153px;top:40.85px;width:38.80000000000001px;height:8.7px;background:#5f5f5f;border-radius:0.8px;"></div>
<svg style="left:154.70000000000002px;top:30.0px" width="4.2" height="7.2" viewBox="0 0 42 72"><path d="M4 17L21 4L38 17M4 55L21 68L38 55" fill="none" stroke="#a8a8a8" stroke-width="5"/></svg>
<svg style="left:154.70000000000002px;top:41.6px" width="4.2" height="7.2" viewBox="0 0 42 72"><path d="M4 17L21 4L38 17M4 55L21 68L38 55" fill="none" stroke="#a8a8a8" stroke-width="5"/></svg>
<svg style="left:185.9px;top:32.800000000000004px" width="3.4" height="2.0" viewBox="0 0 34 20"><path d="M3 3L17 16L31 3" fill="none" stroke="#a8a8a8" stroke-width="5"/></svg>
<svg style="left:185.9px;top:44.400000000000006px" width="3.4" height="2.0" viewBox="0 0 34 20"><path d="M3 3L17 16L31 3" fill="none" stroke="#a8a8a8" stroke-width="5"/></svg>
<div style="position:absolute;left:194.9px;top:34.5px;width:9.8px;height:9.3px;background:#2b2b2b;border-radius:0.8px;"></div>
<svg style="left:198px;top:36px" width="3.6" height="6.4" viewBox="0 0 36 64"><g fill="none" stroke="#e6e6e6" stroke-width="6"><rect x="6" y="4" width="24" height="24" rx="10"/><rect x="6" y="36" width="24" height="24" rx="10"/><path d="M18 20V44"/></g></svg>
<svg style="left:208.6px;top:30.400000000000002px" width="6" height="6" viewBox="0 0 60 60"><path d="M4 54H56L44 14z" fill="#9c9c9c"/><path d="M8 30A34 34 0 0 1 30 6" fill="none" stroke="#9c9c9c" stroke-width="6"/></svg>
<svg style="left:208.6px;top:42.6px" width="6" height="5.2" viewBox="0 0 60 52"><path d="M2 50L20 4H58L40 50z" fill="#bcbcbc"/></svg>
<div style="position:absolute;left:217.5px;top:29.25px;width:38.400000000000006px;height:8.7px;background:#5f5f5f;border-radius:0.8px;"></div>
<div style="position:absolute;left:217.5px;top:40.85px;width:38.400000000000006px;height:8.7px;background:#5f5f5f;border-radius:0.8px;"></div>
<svg style="left:219.20000000000002px;top:30.0px" width="4.2" height="7.2" viewBox="0 0 42 72"><path d="M4 17L21 4L38 17M4 55L21 68L38 55" fill="none" stroke="#a8a8a8" stroke-width="5"/></svg>
<svg style="left:219.20000000000002px;top:41.6px" width="4.2" height="7.2" viewBox="0 0 42 72"><path d="M4 17L21 4L38 17M4 55L21 68L38 55" fill="none" stroke="#a8a8a8" stroke-width="5"/></svg>
<svg style="left:249.9px;top:32.800000000000004px" width="3.4" height="2.0" viewBox="0 0 34 20"><path d="M3 3L17 16L31 3" fill="none" stroke="#a8a8a8" stroke-width="5"/></svg>
<svg style="left:249.9px;top:44.400000000000006px" width="3.4" height="2.0" viewBox="0 0 34 20"><path d="M3 3L17 16L31 3" fill="none" stroke="#a8a8a8" stroke-width="5"/></svg>
<div style="position:absolute;left:258px;top:29px;width:0.7px;height:21px;background:#484848;"></div>
<svg style="left:262.8px;top:30.200000000000003px" width="6.8" height="6.8" viewBox="0 0 68 68"><path d="M54 44A24 24 0 1 1 50 16" fill="none" stroke="#7c7c7c" stroke-width="6"/><path d="M40 2L58 14L42 28z" fill="#7c7c7c"/></svg>
<svg style="left:275.1px;top:30.200000000000003px" width="6.8" height="6.8" viewBox="0 0 68 68"><path d="M14 44A24 24 0 1 0 18 16" fill="none" stroke="#7c7c7c" stroke-width="6"/><path d="M28 2L10 14L26 28z" fill="#7c7c7c"/></svg>
<svg style="left:262.4px;top:42.2px" width="7.6" height="6" viewBox="0 0 76 60"><path d="M2 4L30 30L2 56z" fill="none" stroke="#8a8a8a" stroke-width="5"/><path d="M74 4L46 30L74 56z" fill="#8a8a8a"/><path d="M38 0V60" stroke="#8a8a8a" stroke-width="5"/></svg>
<svg style="left:275.5px;top:41.6px" width="6" height="7.4" viewBox="0 0 60 74"><path d="M4 2L30 30L56 2z" fill="none" stroke="#8a8a8a" stroke-width="5"/><path d="M4 72L30 44L56 72z" fill="#c0c0c0"/><path d="M0 37H60" stroke="#8a8a8a" stroke-width="5"/></svg>
<svg style="left:287.4px;top:33px" width="11.2" height="11.6" viewBox="0 0 112 116"><g fill="none" stroke="#757575" stroke-width="6"><path d="M3 16V3H16M96 3H109V16M109 100V113H96M16 113H3V100"/></g></svg>
<div style="position:absolute;left:302.3px;top:29px;width:0.7px;height:21px;background:#484848;"></div>
<svg style="left:306.6px;top:30.0px" width="6.6" height="7.2" viewBox="0 0 66 72"><g fill="none" stroke="#9a9a9a" stroke-width="6"><path d="M33 4V44M20 16L33 3L46 16"/><path d="M6 46V66H60V46"/><rect x="22" y="40" width="22" height="18" fill="#9a9a9a" stroke="none"/></g></svg>
<svg style="left:318px;top:30.6px" width="8.4" height="6.4" viewBox="0 0 84 64"><g fill="none" stroke="#bdbdbd" stroke-width="7"><path d="M4 30L22 12M4 30L22 48" /><path d="M30 60V8M46 60V30C46 18 68 18 68 30V60"/><path d="M80 30L68 42"/></g></svg>
<svg style="left:306.6px;top:41.6px" width="6.6" height="7.2" viewBox="0 0 66 72"><g fill="none" stroke="#8a8a8a" stroke-width="6"><path d="M33 4V44M20 16L33 3L46 16"/><path d="M6 46V66H60V46"/><rect x="22" y="40" width="22" height="18" fill="#8a8a8a" stroke="none"/></g></svg>
<svg style="left:318px;top:42.2px" width="8.4" height="6.4" viewBox="0 0 84 64"><g fill="none" stroke="#bdbdbd" stroke-width="7"><path d="M4 30L22 12M4 30L22 48" /><path d="M30 60V8M46 60V30C46 18 68 18 68 30V60"/><path d="M80 30L68 42"/></g></svg>
<svg style="left:332.9px;top:29.2px" width="9.4" height="8.8" viewBox="0 0 94 88"><rect x="0" y="0" width="94" height="88" fill="#fff"/><path d="M6 84L88 4" stroke="#ee1c24" stroke-width="9"/><rect x="2" y="2" width="90" height="84" fill="none" stroke="#ddd" stroke-width="4"/></svg>
<svg style="left:332.9px;top:40.8px" width="9.4" height="8.8" viewBox="0 0 94 88"><rect x="0" y="0" width="94" height="88" fill="#000"/><rect x="30" y="28" width="34" height="32" fill="#555"/></svg>
<div style="position:absolute;left:344.2px;top:29.25px;width:5.400000000000034px;height:8.7px;background:#4a4a4a;border:0.7px solid #3e3e3e;border-radius:0.8px;"></div>
<svg style="left:345.9px;top:31.8px" width="2.2" height="3.6" viewBox="0 0 22 36"><path d="M3 3L18 18L3 33" fill="none" stroke="#e0e0e0" stroke-width="5"/></svg>
<div style="position:absolute;left:344.2px;top:40.85px;width:5.400000000000034px;height:8.7px;background:#4a4a4a;border:0.7px solid #3e3e3e;border-radius:0.8px;"></div>
<svg style="left:345.9px;top:43.400000000000006px" width="2.2" height="3.6" viewBox="0 0 22 36"><path d="M3 3L18 18L3 33" fill="none" stroke="#e0e0e0" stroke-width="5"/></svg>
<div style="position:absolute;left:356.4px;top:29.25px;width:6.6px;height:8.7px;background:#4a4a4a;border:0.7px solid #3e3e3e;border-radius:0.8px;"></div>
<svg style="left:357.59999999999997px;top:30.0px" width="4.2" height="7.2" viewBox="0 0 42 72"><path d="M4 17L21 4L38 17M4 55L21 68L38 55" fill="none" stroke="#d0d0d0" stroke-width="5"/></svg>
<div style="position:absolute;left:364px;top:29.25px;width:21.69999999999999px;height:8.7px;background:#5f5f5f;border-radius:0.8px;"></div>
<div style="position:absolute;left:387.2px;top:29.25px;width:7.5px;height:8.7px;background:#4a4a4a;border:0.7px solid #3e3e3e;border-radius:0.8px;"></div>
<svg style="left:389.25px;top:32.800000000000004px" width="3.4" height="2.0" viewBox="0 0 34 20"><path d="M3 3L17 16L31 3" fill="none" stroke="#e0e0e0" stroke-width="5"/></svg>
<div style="position:absolute;left:356.2px;top:40.800000000000004px;width:30.8px;height:8.8px;background:#e2e2e2;border-radius:0.8px;"></div>
<div style="position:absolute;left:358.3px;top:43.7px;width:24.2px;height:3.4px;background:#000;"></div>
<div style="position:absolute;left:387.2px;top:40.85px;width:7.5px;height:8.7px;background:#4a4a4a;border:0.7px solid #3e3e3e;border-radius:0.8px;"></div>
<svg style="left:389.25px;top:44.400000000000006px" width="3.4" height="2.0" viewBox="0 0 34 20"><path d="M3 3L17 16L31 3" fill="none" stroke="#e0e0e0" stroke-width="5"/></svg>
<svg style="left:402px;top:30.400000000000002px" width="6.8" height="6.6" viewBox="0 0 68 66"><rect x="4" y="4" width="46" height="44" rx="6" fill="none" stroke="#b4b4b4" stroke-width="6"/><path d="M58 18V58H18" fill="none" stroke="#8a8a8a" stroke-width="7"/></svg>
<svg style="left:415.2px;top:30.200000000000003px" width="6.6" height="7.2" viewBox="0 0 66 72"><rect x="8" y="4" width="50" height="50" rx="8" fill="none" stroke="#b4b4b4" stroke-width="6"/><rect x="2" y="58" width="62" height="10" fill="#d4d4d4"/></svg>
<div style="position:absolute;left:435px;top:35.2px;width:0.9px;height:0.9px;background:#cfcfcf;"></div>
<svg style="left:400.8px;top:42.1px" width="6.4" height="6.2" viewBox="0 0 64 62"><rect x="3" y="3" width="58" height="56" fill="none" stroke="#a8a8a8" stroke-width="5"/><rect x="3" y="3" width="29" height="28" fill="#8c8c8c"/><rect x="32" y="31" width="29" height="28" fill="#8c8c8c"/></svg>
<div style="position:absolute;left:409.6px;top:40.85px;width:22.399999999999977px;height:8.7px;background:#5f5f5f;border-radius:0.8px;"></div>
<div style="position:absolute;left:433.4px;top:40.85px;width:7.600000000000023px;height:8.7px;background:#4a4a4a;border:0.7px solid #3e3e3e;border-radius:0.8px;"></div>
<svg style="left:436.2px;top:43.400000000000006px" width="2.2" height="3.6" viewBox="0 0 22 36"><path d="M3 3L18 18L3 33" fill="none" stroke="#e0e0e0" stroke-width="5"/></svg>
<div style="position:absolute;left:446.59999999999997px;top:29.1px;width:9.6px;height:9px;background:#2d2d2d;border-radius:0.8px;"></div>
<svg style="left:448.0px;top:30.400000000000002px" width="6.8" height="6.4" viewBox="0 0 68 64"><g fill="#d8d8d8"><rect x="0" y="0" width="68" height="7"/><rect x="0" y="57" width="68" height="7"/><rect x="16" y="16" width="36" height="32"/><rect x="0" y="28" width="68" height="7"/></g></svg>
<svg style="left:460.40000000000003px;top:30.400000000000002px" width="6.8" height="6.4" viewBox="0 0 68 64"><g fill="#a8a8a8"><rect x="0" y="0" width="68" height="7"/><rect x="0" y="57" width="68" height="7"/><rect x="18" y="16" width="32" height="32"/><rect x="0" y="19" width="12" height="6"/><rect x="0" y="38" width="12" height="6"/><rect x="56" y="19" width="12" height="6"/><rect x="56" y="38" width="12" height="6"/></g></svg>
<svg style="left:448.0px;top:42.0px" width="6.8" height="6.4" viewBox="0 0 68 64"><g fill="#a8a8a8"><rect x="0" y="0" width="68" height="7"/><rect x="0" y="57" width="68" height="7"/><circle cx="34" cy="32" r="17"/><rect x="0" y="19" width="12" height="6"/><rect x="0" y="38" width="12" height="6"/><rect x="56" y="19" width="12" height="6"/><rect x="56" y="38" width="12" height="6"/></g></svg>
<svg style="left:460.40000000000003px;top:42.0px" width="6.8" height="6.4" viewBox="0 0 68 64"><g fill="#a8a8a8"><rect x="0" y="0" width="68" height="7"/><rect x="18" y="14" width="32" height="26"/><rect x="0" y="48" width="68" height="7"/><rect x="0" y="58" width="68" height="6"/></g></svg>
<div style="position:absolute;left:471.3px;top:29px;width:0.7px;height:21px;background:#484848;"></div>
<svg style="left:475px;top:30.400000000000002px" width="6.4" height="6.4" viewBox="0 0 64 64"><rect x="8" y="8" width="48" height="48" fill="none" stroke="#7a7a7a" stroke-width="4"/><g fill="#2a9bf0"><rect x="0" y="0" width="16" height="16"/><rect x="48" y="0" width="16" height="16"/><rect x="0" y="48" width="16" height="16"/><rect x="48" y="48" width="16" height="16"/></g></svg>
<div style="position:absolute;left:484.1px;top:29.25px;width:6.6px;height:8.7px;background:#4a4a4a;border:0.7px solid #3e3e3e;border-radius:0.8px;"></div>
<svg style="left:485.29999999999995px;top:30.0px" width="4.2" height="7.2" viewBox="0 0 42 72"><path d="M4 17L21 4L38 17M4 55L21 68L38 55" fill="none" stroke="#d0d0d0" stroke-width="5"/></svg>
<div style="position:absolute;left:491.9px;top:29.25px;width:30.100000000000023px;height:8.7px;background:#5f5f5f;border-radius:0.8px;"></div>
<div style="position:absolute;left:484.1px;top:40.800000000000004px;width:30.3px;height:8.8px;background:#e2e2e2;border-radius:0.8px;"></div>
<svg style="left:485.2px;top:41.800000000000004px" width="26" height="7.8" viewBox="0 0 260 78"><path d="M0 6H236V78" fill="none" stroke="#222" stroke-width="9"/></svg>
<div style="position:absolute;left:515.3px;top:40.85px;width:6.7000000000000455px;height:8.7px;background:#4a4a4a;border:0.7px solid #3e3e3e;border-radius:0.8px;"></div>
<svg style="left:516.9499999999999px;top:44.400000000000006px" width="3.4" height="2.0" viewBox="0 0 34 20"><path d="M3 3L17 16L31 3" fill="none" stroke="#e0e0e0" stroke-width="5"/></svg>
<svg style="left:531.2px;top:30.6px" width="7" height="6.2" viewBox="0 0 70 62"><rect x="4" y="4" width="46" height="46" fill="none" stroke="#bdbdbd" stroke-width="7"/><rect x="18" y="18" width="18" height="18" fill="#bdbdbd"/><rect x="58" y="50" width="8" height="8" fill="#bdbdbd"/></svg>
<div style="position:absolute;left:544px;top:29.200000000000003px;width:73.2px;height:8.8px;background:#e4e4e4;border-radius:0.8px 0 0 0.8px;"></div>
<div style="position:absolute;left:617.7px;top:29.25px;width:7.2999999999999545px;height:8.7px;background:#4a4a4a;border:0.7px solid #3e3e3e;border-radius:0.8px;"></div>
<svg style="left:619.65px;top:32.800000000000004px" width="3.4" height="2.0" viewBox="0 0 34 20"><path d="M3 3L17 16L31 3" fill="none" stroke="#e0e0e0" stroke-width="5"/></svg>
<svg style="left:603.4px;top:42.800000000000004px" width="8" height="5" viewBox="0 0 80 50"><path d="M2 2L22 40L28 26L40 24z" fill="#a0a0a0"/><path d="M44 18A16 16 0 1 1 50 44" fill="none" stroke="#8a8a8a" stroke-width="5"/></svg>
<svg style="left:616.6px;top:42.400000000000006px" width="8" height="5.4" viewBox="0 0 80 54"><rect x="3" y="8" width="34" height="40" fill="none" stroke="#8a8a8a" stroke-width="5"/><path d="M48 34L58 44L78 8" fill="none" stroke="#7c7c7c" stroke-width="6"/></svg>
<div style="position:absolute;left:627px;top:29px;width:0.7px;height:21px;background:#484848;"></div>
<svg style="left:900.6px;top:34.6px" width="4.6" height="7.6" viewBox="0 0 46 76"><path d="M30 0L4 42H22L14 76L44 30H24z" fill="#d8d8d8"/></svg>
<div style="position:absolute;left:910.4px;top:29px;width:0.7px;height:21px;background:#484848;"></div>
<svg style="left:914px;top:30.8px" width="5.2" height="5.2" viewBox="0 0 60 60"><circle cx="30" cy="30" r="16" fill="none" stroke="#e0e0e0" stroke-width="12"/><g stroke="#e0e0e0" stroke-width="10"><path d="M30 0V60M0 30H60" /><path d="M9 9L51 51M51 9L9 51" stroke-width="8"/></g><circle cx="30" cy="30" r="9" fill="#535353"/></svg>
<svg style="left:913.8px;top:42.6px" width="5.6" height="4.8" viewBox="0 0 56 48"><g fill="#a8a8a8"><rect x="0" y="0" width="56" height="9"/><rect x="0" y="19" width="56" height="9"/><rect x="0" y="38" width="56" height="9"/></g></svg>
<div style="position:absolute;left:17.6px;top:52.8px;width:116.4px;height:13.4px;background:#474747;"></div>
<div style="position:absolute;left:134px;top:52.8px;width:99.2px;height:13.4px;background:#535353;"></div>
<div style="position:absolute;left:133.6px;top:52.8px;width:0.7px;height:13.4px;background:#3a3a3a;"></div>
<svg style="left:25.5px;top:57.9px" width="3" height="3" viewBox="0 0 30 30"><path d="M3 3L27 27M27 3L3 27" stroke="#bdbdbd" stroke-width="5"/></svg>
<svg style="left:140.3px;top:57.9px" width="3" height="3" viewBox="0 0 30 30"><path d="M3 3L27 27M27 3L3 27" stroke="#e8e8e8" stroke-width="5"/></svg>
<div style="position:absolute;left:0px;top:52.8px;width:17.6px;height:6px;background:#3a3a3a;"></div>
<div style="position:absolute;left:0px;top:58.8px;width:17.6px;height:420px;background:#535353;"></div>
<div style="position:absolute;left:17.6px;top:52.8px;width:1.4px;height:426px;background:#464646;"></div>
<svg style="left:2px;top:54.4px" width="3.8" height="2.8" viewBox="0 0 38 28"><path d="M3 3L14 14L3 25M20 3L31 14L20 25" fill="none" stroke="#bdbdbd" stroke-width="4.5"/></svg>
<div style="position:absolute;left:4px;top:60.6px;width:9.6px;height:1.1px;background:#464646;border-radius:0.5px;"></div>
<div style="position:absolute;left:3px;top:65.4px;width:12.2px;height:9.8px;background:#303030;border-radius:1px;"></div>
<svg style="left:4.800000000000001px;top:65.8px" width="8" height="9" viewBox="0 0 100 100"><path d="M22 8L84 52L46 58L22 92z" fill="none" stroke="#c6c6c6" stroke-width="7" stroke-linejoin="miter"/></svg>
<svg style="left:4.800000000000001px;top:77.1px" width="8" height="9" viewBox="0 0 100 100"><path d="M20 4L88 56L50 62L20 96z" fill="#d6d6d6"/></svg>
<svg style="left:4.800000000000001px;top:87.4px" width="8" height="9" viewBox="0 0 100 100"><path d="M18 6H58L80 28V88H18z" fill="none" stroke="#dcdcdc" stroke-width="10"/><path d="M54 52L92 76L54 96z" fill="#dcdcdc"/></svg>
<svg style="left:4.6000000000000005px;top:98.7px" width="8.4" height="8" viewBox="0 0 100 100"><path d="M6 6V94M94 6V94M12 50H88M28 36L12 50L28 64M72 36L88 50L72 64" fill="none" stroke="#dcdcdc" stroke-width="7"/><path d="M50 34V66" stroke="#dcdcdc" stroke-width="7"/></svg>
<svg style="left:4.300000000000001px;top:109.0px" width="9" height="9" viewBox="0 0 100 100"><path d="M8 56V92H92V56H70V72H30V56z" fill="#dcdcdc"/><path d="M30 8L52 30M52 8V30H30" fill="none" stroke="#dcdcdc" stroke-width="10"/><path d="M62 18L74 40" stroke="#dcdcdc" stroke-width="8"/></svg>
<svg style="left:13.299999999999999px;top:116.3px" width="2" height="2" viewBox="0 0 16 16"><path d="M16 0V16H0z" fill="#e8e8e8"/></svg>
<svg style="left:13.299999999999999px;top:128.5px" width="2" height="2" viewBox="0 0 16 16"><path d="M16 0V16H0z" fill="#e8e8e8"/></svg>
<svg style="left:4.800000000000001px;top:132.5px" width="8" height="8" viewBox="0 0 100 100"><path d="M12 88L88 12" stroke="#dcdcdc" stroke-width="9"/></svg>
<svg style="left:4.300000000000001px;top:143.3px" width="9" height="9" viewBox="0 0 100 100"><path d="M10 92L22 56L58 18L84 44L46 80z" fill="#dcdcdc"/><path d="M66 8L94 36" stroke="#dcdcdc" stroke-width="12"/><circle cx="48" cy="54" r="7" fill="#535353"/></svg>
<svg style="left:13.299999999999999px;top:150.60000000000002px" width="2" height="2" viewBox="0 0 16 16"><path d="M16 0V16H0z" fill="#e8e8e8"/></svg>
<svg style="left:4.300000000000001px;top:154.1px" width="9" height="9" viewBox="0 0 100 100"><path d="M10 92L18 64L70 12L90 32L38 84z" fill="#dcdcdc"/></svg>
<svg style="left:13.299999999999999px;top:161.4px" width="2" height="2" viewBox="0 0 16 16"><path d="M16 0V16H0z" fill="#e8e8e8"/></svg>
<svg style="left:4.6000000000000005px;top:165.8px" width="8.4" height="7.4" viewBox="0 0 100 100"><rect x="8" y="12" width="84" height="76" fill="none" stroke="#b4b4b4" stroke-width="6"/><path d="M8 12L92 88M92 12L8 88" stroke="#b4b4b4" stroke-width="6"/></svg>
<svg style="left:13.299999999999999px;top:172.3px" width="2" height="2" viewBox="0 0 16 16"><path d="M16 0V16H0z" fill="#e8e8e8"/></svg>
<svg style="left:4.6000000000000005px;top:176.0px" width="8.4" height="7.4" viewBox="0 0 100 100"><rect x="8" y="14" width="84" height="72" fill="#6a6a6a" stroke="#a4a4a4" stroke-width="6"/></svg>
<svg style="left:13.299999999999999px;top:182.5px" width="2" height="2" viewBox="0 0 16 16"><path d="M16 0V16H0z" fill="#e8e8e8"/></svg>
<svg style="left:4.500000000000001px;top:188.1px" width="8.6" height="8.6" viewBox="0 0 100 100"><circle cx="80" cy="22" r="12" fill="none" stroke="#dcdcdc" stroke-width="8"/><circle cx="80" cy="78" r="12" fill="none" stroke="#dcdcdc" stroke-width="8"/><path d="M70 30L4 70M70 70L4 30" stroke="#dcdcdc" stroke-width="8"/></svg>
<svg style="left:4.1000000000000005px;top:197.70000000000002px" width="9.4" height="9.4" viewBox="0 0 100 100"><rect x="34" y="14" width="54" height="58" fill="none" stroke="#dcdcdc" stroke-width="7" stroke-dasharray="12 8"/><path d="M6 6L46 36L6 64z" fill="#dcdcdc"/><path d="M78 78L96 96" stroke="#dcdcdc" stroke-width="8"/><path d="M98 80V98H80z" fill="#dcdcdc"/></svg>
<svg style="left:13.299999999999999px;top:205.20000000000002px" width="2" height="2" viewBox="0 0 16 16"><path d="M16 0V16H0z" fill="#e8e8e8"/></svg>
<svg style="left:4.7px;top:209.2px" width="8.4" height="7.6" viewBox="0 0 90 80"><defs><linearGradient id="gs1" x1="0" x2="1"><stop offset="0" stop-color="#9a9a9a"/><stop offset="1" stop-color="#565656"/></linearGradient></defs><rect x="4" y="4" width="82" height="72" fill="url(#gs1)" stroke="#9c9c9c" stroke-width="6"/></svg>
<svg style="left:4.7px;top:220.8px" width="8.4" height="7.6" viewBox="0 0 90 80"><defs><linearGradient id="gs2" x1="0" x2="0" y1="0" y2="1"><stop offset="0" stop-color="#666"/><stop offset="1" stop-color="#9a9a9a"/></linearGradient></defs><rect x="4" y="4" width="82" height="72" fill="url(#gs2)" stroke="#9c9c9c" stroke-width="6"/><rect x="16" y="22" width="58" height="20" fill="#8c8c8c" stroke="#b0b0b0" stroke-width="4"/></svg>
<svg style="left:4.500000000000001px;top:231.89999999999998px" width="8.6" height="8.6" viewBox="0 0 100 100"><path d="M12 8H88V70L66 92H12z" fill="none" stroke="#dcdcdc" stroke-width="9"/><path d="M28 32H72M28 50H72" stroke="#dcdcdc" stroke-width="8"/><path d="M64 92V68H88" fill="#dcdcdc"/></svg>
<svg style="left:13.299999999999999px;top:239.0px" width="2" height="2" viewBox="0 0 16 16"><path d="M16 0V16H0z" fill="#e8e8e8"/></svg>
<svg style="left:4.1000000000000005px;top:243.10000000000002px" width="9.4" height="9.4" viewBox="0 0 100 100"><path d="M8 92L14 70L54 30L70 46L30 86z" fill="#dcdcdc"/><path d="M52 16L84 48" stroke="#dcdcdc" stroke-width="11"/><path d="M64 36L84 8C92 4 98 12 92 18z" fill="#dcdcdc"/><path d="M44 94H96" stroke="#dcdcdc" stroke-width="6"/></svg>
<svg style="left:13.299999999999999px;top:250.60000000000002px" width="2" height="2" viewBox="0 0 16 16"><path d="M16 0V16H0z" fill="#e8e8e8"/></svg>
<svg style="left:4.300000000000001px;top:254.0px" width="9" height="9" viewBox="0 0 100 100"><path d="M22 52V26C22 18 32 18 32 26V14C32 6 43 6 43 14V10C43 2 54 2 54 10V16C54 9 65 9 65 16V40L72 30C78 22 88 28 82 38L66 78C60 92 30 92 24 78z" fill="#dcdcdc"/></svg>
<svg style="left:4.500000000000001px;top:264.59999999999997px" width="8.6" height="8.6" viewBox="0 0 100 100"><circle cx="38" cy="36" r="26" fill="none" stroke="#d0d0d0" stroke-width="7"/><path d="M56 56L92 94" stroke="#d0d0d0" stroke-width="10"/></svg>
<svg style="left:2.6px;top:277px" width="4.6" height="4.6" viewBox="0 0 46 46"><rect x="14" y="14" width="30" height="30" fill="#222" stroke="#ccc" stroke-width="3"/><rect x="2" y="2" width="28" height="28" fill="#fff"/><path d="M4 28L28 4" stroke="#e22" stroke-width="5"/></svg>
<svg style="left:10.6px;top:277px" width="4.8" height="4.8" viewBox="0 0 48 48"><path d="M8 16H28C36 16 36 22 36 28V40M16 6L6 16L16 26M28 32L36 42L44 32" fill="none" stroke="#cfcfcf" stroke-width="5"/></svg>
<svg style="left:7.2px;top:289.1px" width="8.8" height="8.6" viewBox="0 0 88 86"><rect x="0" y="0" width="88" height="86" fill="#0a0a0a"/><rect x="26" y="26" width="36" height="34" fill="#535353"/></svg>
<svg style="left:2.3px;top:284.4px" width="8.9" height="9.2" viewBox="0 0 89 92"><rect x="0" y="0" width="89" height="92" fill="#fff"/><path d="M4 88L85 4" stroke="#ee1c24" stroke-width="12"/><rect x="2" y="2" width="85" height="88" fill="none" stroke="#e8e8e8" stroke-width="4"/></svg>
<div style="position:absolute;left:3.2px;top:301.2px;width:5.2px;height:5.2px;background:#3a3a3a;"></div>
<svg style="left:4px;top:302px" width="3.6" height="3.6" viewBox="0 0 36 36"><rect x="3" y="3" width="30" height="30" fill="none" stroke="#b8b8b8" stroke-width="6"/></svg>
<div style="position:absolute;left:2.9px;top:310px;width:12px;height:8.8px;background:#303030;border-radius:1px;"></div>
<svg style="left:5.3px;top:311px" width="6.8" height="6.4" viewBox="0 0 68 64"><rect x="0" y="0" width="68" height="64" fill="#fff"/><path d="M4 60L64 4" stroke="#ee1c24" stroke-width="11"/></svg>
<svg style="left:13.5px;top:317.2px" width="2" height="2" viewBox="0 0 16 16"><path d="M16 0V16H0z" fill="#e8e8e8"/></svg>
<div style="position:absolute;left:2.9px;top:323.1px;width:12px;height:9px;background:#303030;border-radius:1px;"></div>
<svg style="left:6.2px;top:325px" width="6" height="5.4" viewBox="0 0 60 54"><rect x="0" y="0" width="60" height="54" fill="#bdbdbd"/><rect x="10" y="12" width="40" height="26" fill="#555"/><rect x="18" y="18" width="24" height="14" fill="#c8c8c8"/></svg>
<svg style="left:13.5px;top:330.40000000000003px" width="2" height="2" viewBox="0 0 16 16"><path d="M16 0V16H0z" fill="#e8e8e8"/></svg>
<div style="position:absolute;left:861.3px;top:66px;width:6.8px;height:405.4px;background:#4b4b4b;"></div>
<div style="position:absolute;left:862px;top:128px;width:5.9px;height:279.6px;background:#686868;border-radius:2.9px;"></div>
<svg style="left:863.2px;top:68.4px" width="3.6" height="2.2" viewBox="0 0 36 22"><path d="M3 19L18 4L33 19" fill="none" stroke="#a0a0a0" stroke-width="5"/></svg>
<svg style="left:863.2px;top:466.8px" width="3.6" height="2.2" viewBox="0 0 36 22"><path d="M3 3L18 18L33 3" fill="none" stroke="#a0a0a0" stroke-width="5"/></svg>
<div style="position:absolute;left:868px;top:52.8px;width:1.5px;height:425.6px;background:#3d3d3d;"></div>
<div style="position:absolute;left:869.4px;top:52.8px;width:53.6px;height:6px;background:#3f3f3f;"></div>
<div style="position:absolute;left:869.4px;top:58.8px;width:53.6px;height:419.8px;background:#535353;"></div>
<svg style="left:916px;top:54.6px" width="3.6" height="2.6" viewBox="0 0 36 26"><path d="M14 3L4 13L14 23M30 3L20 13L30 23" fill="none" stroke="#b0b0b0" stroke-width="4.5"/></svg>
<div style="position:absolute;left:891.4px;top:60.4px;width:8.6px;height:1.1px;background:#444;border-radius:0.5px;"></div>
<div style="position:absolute;left:869.4px;top:101.2px;width:53.6px;height:1.4px;background:#454545;"></div>
<div style="position:absolute;left:891.4px;top:104.2px;width:8.6px;height:1.1px;background:#444;border-radius:0.5px;"></div>
<div style="position:absolute;left:869.4px;top:132.4px;width:53.6px;height:1.4px;background:#454545;"></div>
<div style="position:absolute;left:891.4px;top:135.4px;width:8.6px;height:1.1px;background:#444;border-radius:0.5px;"></div>
<div style="position:absolute;left:869.4px;top:150.8px;width:53.6px;height:1.2px;background:#474747;"></div>
<svg style="left:873.9px;top:65.2px" width="9" height="8" viewBox="0 0 90 80"><path d="M6 22L20 14H40V74H6z" fill="#dedede"/><path d="M50 14H70L84 22V74H50z" fill="#dedede"/><path d="M45 2V80" stroke="#dedede" stroke-width="5"/><path d="M14 34H32M14 48H32M58 34H76M58 48H76" stroke="#777" stroke-width="5"/></svg>
<svg style="left:873.9px;top:78.0px" width="9" height="8" viewBox="0 0 90 80"><path d="M45 4L86 26L45 48L4 26z" fill="#dedede"/><path d="M8 44L45 64L82 44" fill="none" stroke="#dedede" stroke-width="8"/></svg>
<svg style="left:873.9px;top:90.3px" width="9" height="8" viewBox="0 0 90 80"><rect x="4" y="24" width="44" height="32" rx="14" fill="none" stroke="#dedede" stroke-width="8"/><rect x="42" y="24" width="44" height="32" rx="14" fill="none" stroke="#dedede" stroke-width="8"/></svg>
<svg style="left:874.1px;top:109.3px" width="8.6" height="7" viewBox="0 0 90 80"><rect x="4" y="8" width="82" height="5" fill="#c0c0c0"/><rect x="4" y="30" width="82" height="9" fill="#dadada"/><rect x="4" y="56" width="82" height="16" fill="#f2f2f2"/></svg>
<svg style="left:873.9px;top:121.6px" width="9" height="8" viewBox="0 0 90 80"><ellipse cx="42" cy="48" rx="38" ry="24" fill="none" stroke="#dedede" stroke-width="9"/><path d="M30 40H82V54H30z" fill="#dedede"/><path d="M44 8H70V30H44z" fill="#dedede"/></svg>
<svg style="left:873.9px;top:140.0px" width="9" height="8" viewBox="0 0 90 80"><rect x="4" y="10" width="82" height="60" fill="#cfcfcf"/><rect x="12" y="18" width="18" height="14" fill="#555"/><rect x="36" y="18" width="18" height="14" fill="#777"/><rect x="60" y="18" width="18" height="14" fill="#555"/><rect x="12" y="38" width="66" height="6" fill="#999"/><rect x="12" y="50" width="66" height="12" fill="#e8e8e8"/></svg>
<div style="position:absolute;left:19px;top:471.4px;width:849.6px;height:7.3px;background:#4a4a4a;"></div>
<div style="position:absolute;left:19px;top:471px;width:849.6px;height:0.6px;background:#444;"></div>
<svg style="left:24px;top:473px" width="3.6" height="3.8" viewBox="0 0 36 38"><path d="M4 2V36" stroke="#8e8e8e" stroke-width="6"/><path d="M34 2L10 19L34 36z" fill="#8e8e8e"/></svg>
<svg style="left:33.8px;top:473px" width="2.6" height="3.8" viewBox="0 0 26 38"><path d="M24 2L2 19L24 36z" fill="#8e8e8e"/></svg>
<div style="position:absolute;left:42.8px;top:471.9px;width:31.2px;height:6.4px;background:#3a3a3a;"></div>
<div style="position:absolute;left:74.8px;top:471.9px;width:7.4px;height:6.4px;background:#3a3a3a;"></div>
<svg style="left:76.89999999999999px;top:474.2px" width="3.4" height="2.0" viewBox="0 0 34 20"><path d="M3 3L17 16L31 3" fill="none" stroke="#e8e8e8" stroke-width="5"/></svg>
<svg style="left:88.4px;top:473px" width="2.6" height="3.8" viewBox="0 0 26 38"><path d="M2 2L24 19L2 36z" fill="#8e8e8e"/></svg>
<svg style="left:97px;top:473px" width="3.6" height="3.8" viewBox="0 0 36 38"><path d="M32 2V36" stroke="#8e8e8e" stroke-width="6"/><path d="M2 2L26 19L2 36z" fill="#8e8e8e"/></svg>
<svg style="left:108.6px;top:472.2px" width="6" height="5.6" viewBox="0 0 60 56"><path d="M8 50V24C8 4 44 4 44 24V50" fill="none" stroke="#cfcfcf" stroke-width="9"/><circle cx="50" cy="46" r="7" fill="#cfcfcf"/></svg>
<svg style="left:169.27px;top:474.20000000000005px" width="3.06" height="1.8" viewBox="0 0 34 20"><path d="M3 3L17 16L31 3" fill="none" stroke="#d0d0d0" stroke-width="5"/></svg>
<div style="position:absolute;left:179.7px;top:472.7px;width:4.8px;height:4.8px;border-radius:50%;background:#2fc04a;"></div>
<svg style="left:215.27px;top:474.20000000000005px" width="3.06" height="1.8" viewBox="0 0 34 20"><path d="M3 3L17 16L31 3" fill="none" stroke="#d0d0d0" stroke-width="5"/></svg>
<svg style="left:223px;top:473.4px" width="1.8" height="3.2" viewBox="0 0 18 32"><path d="M15 3L3 16L15 29" fill="none" stroke="#aaa" stroke-width="5"/></svg>
<div style="position:absolute;left:227px;top:471.8px;width:623px;height:6.4px;background:#444;"></div>
<div style="position:absolute;left:498.4px;top:472.4px;width:230.2px;height:5.2px;background:#686868;border-radius:2.6px;"></div>
<svg style="left:846.4px;top:473.2px" width="1.8" height="3.2" viewBox="0 0 18 32"><path d="M3 3L15 16L3 29" fill="none" stroke="#999" stroke-width="5"/></svg>
<svg style="left:852.8px;top:472.8px" width="8.4" height="4.6" viewBox="0 0 84 46"><rect x="3" y="3" width="78" height="40" fill="none" stroke="#d0d0d0" stroke-width="6"/><path d="M42 3V43" stroke="#d0d0d0" stroke-width="6"/></svg>
<div style="position:absolute;left:0;top:478.6px;width:32px;height:40.4px;background:linear-gradient(180deg,rgba(150,100,30,0.45) 0,rgba(110,70,28,0.28) 12%,rgba(60,35,20,0.1) 28%,rgba(0,0,0,0) 40%),linear-gradient(90deg,#38241a,#3a2415 60%,#3d2716);"></div>
<div style="position:absolute;left:891.8px;top:478.6px;width:31.2px;height:40.4px;background:linear-gradient(180deg,#2e1c04 0,#3a2606 12%,#4e360a 35%,#58400c 60%,#4a340a 100%);"></div>
<div style="position:absolute;left:31.3px;top:478.7px;width:860.7px;height:40.3px;background:linear-gradient(180deg,rgba(0,0,0,0.05) 0,rgba(0,0,0,0) 30%,rgba(255,255,255,0.04) 100%),linear-gradient(90deg,#96705f 0%,#9d7361 4%,#b37766 9%,#c37c66 14%,#cf8162 20%,#d88052 25%,#e07c36 29%,#e88024 34%,#ee861c 40%,#f18a16 50%,#f28c14 62%,#f08c14 76%,#e48c1a 81%,#d08c24 85.5%,#b4873a 88%,#b68836 91%,#c48e2c 95%,#b88a30 100%);"></div>
<div style="position:absolute;left:250px;top:495px;width:90px;height:24px;background:radial-gradient(ellipse at 30% 100%,rgba(222,140,110,0.8),rgba(222,140,110,0) 70%);"></div>
<div style="position:absolute;left:770px;top:478.7px;width:122px;height:40.3px;background:radial-gradient(ellipse 75% 90% at 45% 110%,rgba(232,140,24,0.85),rgba(232,140,24,0) 100%);"></div>
<div style="position:absolute;left:770px;top:478.7px;width:122px;height:40.3px;background:radial-gradient(ellipse 60% 70% at 40% -10%,rgba(150,125,70,0.55),rgba(150,125,70,0) 100%);"></div>
<div style="position:absolute;left:49.199999999999996px;top:516.1px;width:1.2px;height:1.2px;border-radius:50%;background:#2a1a10;"></div>
<div style="position:absolute;left:646.0px;top:516.1px;width:1.2px;height:1.2px;border-radius:50%;background:#2a1a10;"></div>
<div style="position:absolute;left:681.4px;top:516.1px;width:1.2px;height:1.2px;border-radius:50%;background:#2a1a10;"></div>
<div style="position:absolute;left:716.4px;top:516.1px;width:1.2px;height:1.2px;border-radius:50%;background:#2a1a10;"></div>
<div style="position:absolute;left:751.4px;top:516.1px;width:1.2px;height:1.2px;border-radius:50%;background:#2a1a10;"></div>
<svg style="left:36.3px;top:484.8px;" width="27.4" height="26" viewBox="0 0 274 260"><defs><linearGradient id="fA" x1="0" y1="0" x2="0" y2="1"><stop offset="0" stop-color="#22c4fb"/><stop offset="1" stop-color="#1b6fe2"/></linearGradient><linearGradient id="fB" x1="0" y1="0" x2="0" y2="1"><stop offset="0" stop-color="#f6f8fb"/><stop offset="1" stop-color="#d5deeb"/></linearGradient><clipPath id="fC"><rect x="0" y="0" width="274" height="260" rx="22"/></clipPath></defs>
<g clip-path="url(#fC)"><rect width="274" height="260" fill="url(#fB)"/><path d="M0 0H150C128 60 118 110 116 150H152C150 190 154 230 162 260H0z" fill="url(#fA)"/>
<path d="M150 0C128 60 118 110 116 150H152C150 190 154 230 162 260" fill="none" stroke="#1d2b45" stroke-width="7"/>
<path d="M52 170C100 215 180 215 226 170" fill="none" stroke="#16233f" stroke-width="9" stroke-linecap="round"/>
<rect x="70" y="62" width="9" height="34" rx="4" fill="#16233f"/><rect x="190" y="62" width="9" height="34" rx="4" fill="#16233f"/></g></svg>
<svg style="left:70.5px;top:483.0px;" width="29" height="29" viewBox="0 0 290 290"><defs><radialGradient id="sA" cx="0.5" cy="0.55" r="0.55"><stop offset="0" stop-color="#2c3a88"/><stop offset="0.7" stop-color="#1d1f55"/><stop offset="1" stop-color="#14102e"/></radialGradient><radialGradient id="sW" cx="0.5" cy="0.5" r="0.5"><stop offset="0" stop-color="#fff"/><stop offset="0.3" stop-color="#e4f2ff" stop-opacity="0.95"/><stop offset="1" stop-color="#7cd0ff" stop-opacity="0"/></radialGradient>
<radialGradient id="sM" cx="0.5" cy="0.5" r="0.5"><stop offset="0" stop-color="#f03aa0"/><stop offset="0.6" stop-color="#c0309a" stop-opacity="0.8"/><stop offset="1" stop-color="#9a2a9a" stop-opacity="0"/></radialGradient>
<radialGradient id="sC" cx="0.5" cy="0.5" r="0.5"><stop offset="0" stop-color="#30b4ff"/><stop offset="0.6" stop-color="#2a70e0" stop-opacity="0.8"/><stop offset="1" stop-color="#2a50c0" stop-opacity="0"/></radialGradient>
<radialGradient id="sG" cx="0.5" cy="0.5" r="0.5"><stop offset="0" stop-color="#38e8a0"/><stop offset="1" stop-color="#2ac08a" stop-opacity="0"/></radialGradient><clipPath id="sCl"><circle cx="145" cy="145" r="130"/></clipPath></defs>
<circle cx="145" cy="145" r="144" fill="#e9e9ee"/><circle cx="145" cy="145" r="130" fill="url(#sA)"/>
<g clip-path="url(#sCl)"><ellipse cx="165" cy="60" rx="150" ry="85" fill="url(#sM)"/><ellipse cx="50" cy="175" rx="110" ry="110" fill="url(#sC)"/><ellipse cx="235" cy="175" rx="48" ry="48" fill="url(#sG)" opacity="0.85"/>
<ellipse cx="175" cy="250" rx="60" ry="50" fill="url(#sM)" opacity="0.45"/>
<ellipse cx="140" cy="150" rx="135" ry="36" fill="url(#sW)" transform="rotate(-30 140 150)"/><ellipse cx="160" cy="165" rx="110" ry="22" fill="url(#sW)" transform="rotate(68 160 165)"/><ellipse cx="190" cy="135" rx="80" ry="16" fill="url(#sW)" transform="rotate(-8 190 135)" opacity="0.8"/><circle cx="148" cy="140" r="30" fill="#fff"/></g></svg>
<svg style="left:106.3px;top:483.2px;" width="28.6" height="28.6" viewBox="0 0 286 286"><defs><linearGradient id="lA" x1="0" y1="0" x2="0" y2="1"><stop offset="0" stop-color="#dfe3e6"/><stop offset="1" stop-color="#8c9095"/></linearGradient></defs>
<circle cx="143" cy="143" r="142" fill="#e3e6e9"/><circle cx="143" cy="143" r="131" fill="url(#lA)"/>
<path d="M222 52C170 58 128 92 100 140L60 146L36 176L84 176L110 202L110 250L140 226L146 186C194 158 228 116 222 52z" fill="#47484c"/><path d="M56 196L90 230L40 246z" fill="#47484c"/><circle cx="172" cy="112" r="16" fill="#9da1a6"/></svg>
<svg style="left:141.2px;top:483.2px;" width="28.6" height="28.6" viewBox="0 0 286 286"><defs><linearGradient id="saA" x1="0" y1="0" x2="0" y2="1"><stop offset="0" stop-color="#1fc0f5"/><stop offset="1" stop-color="#1b6fe3"/></linearGradient></defs>
<circle cx="143" cy="143" r="141" fill="#eef0f3"/><circle cx="143" cy="143" r="126" fill="url(#saA)"/><circle cx="143" cy="143" r="112" fill="none" stroke="#8fd0f8" stroke-width="14" stroke-dasharray="3 9" opacity="0.7"/>
<path d="M232 54L160 160L126 126z" fill="#f03a34"/><path d="M54 232L160 160L126 126z" fill="#f4f4f4"/></svg>
<svg style="left:178.5px;top:483.6px;" width="23.5" height="28.6" viewBox="0 0 235 286"><defs><linearGradient id="mA" x1="0" y1="0" x2="0" y2="1"><stop offset="0" stop-color="#3487e6"/><stop offset="0.6" stop-color="#5fa8ee"/><stop offset="1" stop-color="#bcdcf4"/></linearGradient></defs>
<g transform="rotate(-8 118 143)"><rect x="8" y="10" width="218" height="266" fill="#fbfbfb" stroke="#fff" stroke-width="8" stroke-dasharray="10 8"/><rect x="8" y="10" width="218" height="266" fill="#fafafa"/><rect x="28" y="30" width="178" height="226" fill="url(#mA)"/>
<path d="M60 70C70 60 90 62 96 84C104 112 112 128 130 146C160 150 190 168 204 196C180 190 160 190 140 196C120 200 100 196 88 184C100 176 104 168 100 156C84 136 66 110 60 70z" fill="#7a5a3c"/><path d="M60 70C70 60 90 62 96 84L100 120C84 108 66 96 60 70z" fill="#e8e4dc"/><path d="M88 184C100 176 108 170 116 160L128 176C116 190 100 192 88 184z" fill="#d8a860"/><circle cx="176" cy="216" r="18" fill="#3a4a6a" opacity="0.7"/></g></svg>
<svg style="left:210.6px;top:481.4px;" width="30" height="33" viewBox="0 0 280 310"><g transform="rotate(-5 140 155)"><rect x="200" y="40" width="34" height="50" rx="6" fill="#e8e8e8"/><rect x="200" y="92" width="34" height="50" rx="6" fill="#5aa8e8"/><rect x="200" y="144" width="34" height="44" rx="6" fill="#58c86a"/><rect x="200" y="190" width="34" height="50" rx="6" fill="#f0982a"/>
<rect x="22" y="14" width="196" height="272" rx="10" fill="#b98c54"/><rect x="22" y="14" width="22" height="272" rx="8" fill="#a97c46"/><circle cx="130" cy="140" r="58" fill="#ad8048"/><circle cx="130" cy="120" r="22" fill="#b98c54"/><path d="M90 178C96 150 164 150 170 178z" fill="#b98c54"/></g></svg>
<svg style="left:245.6px;top:483.4px;" width="29" height="29" viewBox="0 0 290 290"><g transform="rotate(-6 145 145)"><rect x="22" y="30" width="246" height="240" rx="18" fill="#3c4a58"/><rect x="22" y="22" width="246" height="236" rx="16" fill="#fbfbfb"/><path d="M22 92V38C22 29 29 22 38 22H252C261 22 268 29 268 38V92z" fill="#ea4440"/></g></svg>
<svg style="left:281.6px;top:480.8px;" width="28.8" height="33" viewBox="0 0 280 316"><g transform="rotate(-6 140 158)"><rect x="24" y="26" width="226" height="262" rx="6" fill="#fcfcfa"/><rect x="24" y="26" width="226" height="42" rx="4" fill="#f8c93e"/><g stroke="#d9d9d6" stroke-width="4"><path d="M30 98H244M30 122H244M30 146H244M30 170H244M30 194H244M30 218H244M30 242H244M30 266H244"/></g></g></svg>
<svg style="left:317.2px;top:481.2px;" width="28.6" height="32" viewBox="0 0 280 310"><g transform="rotate(-8 140 155)"><rect x="30" y="28" width="216" height="256" rx="22" fill="#6e6e6e"/><rect x="28" y="22" width="216" height="254" rx="22" fill="#fafafa"/><circle cx="66" cy="78" r="17" fill="#ff9410"/><circle cx="66" cy="126" r="17" fill="#1d9bf6"/><circle cx="66" cy="174" r="17" fill="#4cd04a"/><circle cx="66" cy="222" r="17" fill="#c858e8"/><g stroke="#dedede" stroke-width="5"><path d="M100 92H226M100 140H226M100 188H226M100 236H226"/></g></g></svg>
<svg style="left:351.2px;top:483.2px;" width="32" height="30" viewBox="0 0 320 300"><defs><clipPath id="mpC"><rect x="18" y="22" width="228" height="240" rx="6"/></clipPath></defs>
<g transform="rotate(-8 132 142)"><rect x="14" y="18" width="236" height="248" rx="8" fill="#fdfdfd"/><g clip-path="url(#mpC)"><rect x="18" y="22" width="228" height="240" fill="#f1ead8"/><path d="M120 22C130 90 190 130 246 140V22z" fill="#a8dc7e"/><path d="M100 22C112 108 180 156 246 166" fill="none" stroke="#fff" stroke-width="22"/><path d="M18 100L120 190L246 200" fill="none" stroke="#f9d046" stroke-width="30"/><rect x="18" y="200" width="60" height="62" fill="#f6d4cc"/><path d="M92 262V210M140 262V210" stroke="#fff" stroke-width="14"/><path d="M70 30V150" stroke="#1f86e8" stroke-width="24"/><circle cx="70" cy="170" r="36" fill="#1f86e8"/><path d="M70 146L86 190L70 180L54 190z" fill="#fff"/></g></g>
<circle cx="232" cy="204" r="72" fill="#f4f4f4"/><circle cx="232" cy="204" r="48" fill="none" stroke="#a8c8e0" stroke-width="5"/><path d="M232 124L242 146H222z" fill="#f04040"/></svg>
<svg style="left:386.59999999999997px;top:482.9px;" width="29.2" height="29.2" viewBox="0 0 286 286"><circle cx="143" cy="143" r="141" fill="#e6e6e6"/><circle cx="143" cy="143" r="134" fill="#fafafa"/><ellipse cx="143" cy="84" rx="36" ry="58" fill="#f8b820" opacity="0.88" transform="rotate(0 143 143)"/><ellipse cx="143" cy="84" rx="36" ry="58" fill="#f0d030" opacity="0.88" transform="rotate(45 143 143)"/><ellipse cx="143" cy="84" rx="36" ry="58" fill="#a8d048" opacity="0.88" transform="rotate(90 143 143)"/><ellipse cx="143" cy="84" rx="36" ry="58" fill="#68c078" opacity="0.88" transform="rotate(135 143 143)"/><ellipse cx="143" cy="84" rx="36" ry="58" fill="#5aa8e0" opacity="0.88" transform="rotate(180 143 143)"/><ellipse cx="143" cy="84" rx="36" ry="58" fill="#8878d0" opacity="0.88" transform="rotate(225 143 143)"/><ellipse cx="143" cy="84" rx="36" ry="58" fill="#c070c0" opacity="0.88" transform="rotate(270 143 143)"/><ellipse cx="143" cy="84" rx="36" ry="58" fill="#e85050" opacity="0.88" transform="rotate(315 143 143)"/></svg>
<svg style="left:420px;top:483px;" width="34" height="30" viewBox="0 0 340 300"><defs><linearGradient id="msA" x1="0" y1="0" x2="0" y2="1"><stop offset="0" stop-color="#5ac0fb"/><stop offset="1" stop-color="#1b78ec"/></linearGradient></defs>
<path d="M60 210C40 250 30 262 14 272C50 272 80 256 98 232z" fill="#1b78ec"/><ellipse cx="162" cy="132" rx="146" ry="112" fill="url(#msA)"/>
<path d="M250 258C262 276 274 282 290 284C262 290 240 280 228 262z" fill="#eef2f8"/><ellipse cx="216" cy="208" rx="88" ry="62" fill="#f2f5fa"/><circle cx="176" cy="208" r="12" fill="#2058c0"/><circle cx="216" cy="208" r="12" fill="#2058c0"/><circle cx="256" cy="208" r="12" fill="#2058c0"/></svg>
<svg style="left:455.8px;top:484.8px;" width="32" height="27" viewBox="0 0 320 270"><defs><linearGradient id="ftA" x1="0" y1="0" x2="0" y2="1"><stop offset="0" stop-color="#34e070"/><stop offset="1" stop-color="#1dbe4e"/></linearGradient></defs>
<rect x="4" y="2" width="266" height="238" rx="34" fill="url(#ftA)"/><rect x="52" y="64" width="122" height="104" rx="14" fill="#f4f4f4"/><path d="M186 116L232 74V160z" fill="#f4f4f4"/>
<circle cx="228" cy="184" r="70" fill="#f6f6f6"/><path d="M196 158C192 176 224 222 250 222C258 222 262 214 258 208L246 198C240 196 236 200 232 204C222 198 212 184 208 174C214 170 216 166 214 160L206 148C200 146 196 150 196 158z" fill="#28c858"/></svg>
<svg style="left:491.4px;top:482.9px;" width="29.2" height="29.2" viewBox="0 0 292 292"><defs><linearGradient id="itR" x1="0.2" y1="0" x2="0.8" y2="1"><stop offset="0" stop-color="#ff5a8a"/><stop offset="0.5" stop-color="#c060e0"/><stop offset="1" stop-color="#38b0f8"/></linearGradient><linearGradient id="itN" x1="0" y1="0" x2="0.3" y2="1"><stop offset="0" stop-color="#ff5070"/><stop offset="0.55" stop-color="#c868e0"/><stop offset="1" stop-color="#3aa8f8"/></linearGradient></defs>
<circle cx="146" cy="146" r="144" fill="url(#itR)"/><circle cx="146" cy="146" r="132" fill="#f8f8fa"/>
<path d="M112 78L206 56V178A30 26 0 1 1 186 154V96L132 108V200A30 26 0 1 1 112 176z" fill="url(#itN)"/></svg>
<svg style="left:527.1px;top:483.1px;" width="28.8" height="28.8" viewBox="0 0 288 288"><defs><linearGradient id="ibA" x1="0" y1="0" x2="0" y2="1"><stop offset="0" stop-color="#fbb01e"/><stop offset="0.6" stop-color="#f07c10"/><stop offset="1" stop-color="#e4580a"/></linearGradient></defs>
<circle cx="144" cy="144" r="142" fill="#f6e0c0"/><circle cx="144" cy="144" r="134" fill="url(#ibA)"/>
<path d="M138 96C112 78 80 76 56 84V196C82 188 112 190 138 208z M150 96C176 78 208 76 232 84V196C206 188 176 190 150 208z" fill="#fbf4ea"/></svg>
<svg style="left:561.7px;top:483.1px;" width="28.8" height="28.8" viewBox="0 0 288 288"><defs><linearGradient id="asA" x1="0" y1="0" x2="0" y2="1"><stop offset="0" stop-color="#1fa8fa"/><stop offset="1" stop-color="#1a68e6"/></linearGradient></defs>
<circle cx="144" cy="144" r="142" fill="#d8e8f8"/><circle cx="144" cy="144" r="136" fill="url(#asA)"/>
<g stroke="#fff" stroke-width="20" stroke-linecap="round"><path d="M150 70L84 196M134 70L204 196M50 166H238"/></g></svg>
<div style="position:absolute;left:581.3px;top:482.9px;width:9.8px;height:9.8px;border-radius:50%;background:#f8423a;"></div>
<svg style="left:597px;top:484.4px;" width="29" height="26.6" viewBox="0 0 290 266"><defs><linearGradient id="spA" x1="0" y1="0" x2="0" y2="1"><stop offset="0" stop-color="#c4ccd4"/><stop offset="1" stop-color="#6c747c"/></linearGradient></defs>
<rect width="290" height="266" rx="6" fill="url(#spA)"/><rect x="137" y="22" width="16" height="22" fill="#3a3b3e" transform="rotate(0 145 132)"/><rect x="137" y="22" width="16" height="22" fill="#3a3b3e" transform="rotate(15 145 132)"/><rect x="137" y="22" width="16" height="22" fill="#3a3b3e" transform="rotate(30 145 132)"/><rect x="137" y="22" width="16" height="22" fill="#3a3b3e" transform="rotate(45 145 132)"/><rect x="137" y="22" width="16" height="22" fill="#3a3b3e" transform="rotate(60 145 132)"/><rect x="137" y="22" width="16" height="22" fill="#3a3b3e" transform="rotate(75 145 132)"/><rect x="137" y="22" width="16" height="22" fill="#3a3b3e" transform="rotate(90 145 132)"/><rect x="137" y="22" width="16" height="22" fill="#3a3b3e" transform="rotate(105 145 132)"/><rect x="137" y="22" width="16" height="22" fill="#3a3b3e" transform="rotate(120 145 132)"/><rect x="137" y="22" width="16" height="22" fill="#3a3b3e" transform="rotate(135 145 132)"/><rect x="137" y="22" width="16" height="22" fill="#3a3b3e" transform="rotate(150 145 132)"/><rect x="137" y="22" width="16" height="22" fill="#3a3b3e" transform="rotate(165 145 132)"/><rect x="137" y="22" width="16" height="22" fill="#3a3b3e" transform="rotate(180 145 132)"/><rect x="137" y="22" width="16" height="22" fill="#3a3b3e" transform="rotate(195 145 132)"/><rect x="137" y="22" width="16" height="22" fill="#3a3b3e" transform="rotate(210 145 132)"/><rect x="137" y="22" width="16" height="22" fill="#3a3b3e" transform="rotate(225 145 132)"/><rect x="137" y="22" width="16" height="22" fill="#3a3b3e" transform="rotate(240 145 132)"/><rect x="137" y="22" width="16" height="22" fill="#3a3b3e" transform="rotate(255 145 132)"/><rect x="137" y="22" width="16" height="22" fill="#3a3b3e" transform="rotate(270 145 132)"/><rect x="137" y="22" width="16" height="22" fill="#3a3b3e" transform="rotate(285 145 132)"/><rect x="137" y="22" width="16" height="22" fill="#3a3b3e" transform="rotate(300 145 132)"/><rect x="137" y="22" width="16" height="22" fill="#3a3b3e" transform="rotate(315 145 132)"/><rect x="137" y="22" width="16" height="22" fill="#3a3b3e" transform="rotate(330 145 132)"/><rect x="137" y="22" width="16" height="22" fill="#3a3b3e" transform="rotate(345 145 132)"/><circle cx="145" cy="132" r="96" fill="#3a3b3e"/><circle cx="145" cy="132" r="74" fill="#6a6c70"/><circle cx="145" cy="132" r="62" fill="#4a4c50"/>
<g stroke="#2a2b2e" stroke-width="18"><path d="M145 132L84 96M145 132L206 132M145 132L110 192"/></g><circle cx="145" cy="132" r="16" fill="#2a2b2e"/></svg>
<svg style="left:632.1px;top:482.7px;" width="29.6" height="29.6" viewBox="0 0 296 296"><circle cx="148" cy="148" r="146" fill="#dc4437"/>
<path d="M148 148L21.6 75A146 146 0 0 0 148 294L211 185z" fill="#1ba160"/><path d="M148 148L211 185L148 294A146 146 0 0 0 274.4 75H148z" fill="#fdce42"/>
<path d="M21.6 75A146 146 0 0 1 274.4 75H148z" fill="#dc4437"/><path d="M148 148L85 185L21.6 75z" fill="#dc4437"/>
<path d="M148 75H274.4A146 146 0 0 1 148 294L211 185A73 73 0 0 0 148 75z" fill="#fdce42"/><path d="M85 185L21.6 75A146 146 0 0 0 148 294L211 185A73 73 0 0 1 85 185z" fill="#1ba160"/><path d="M21.6 75A146 146 0 0 1 274.4 75H148A73 73 0 0 0 85 185z" fill="#dc4437"/>
<circle cx="148" cy="148" r="68" fill="#f4f4f4"/><circle cx="148" cy="148" r="54" fill="#4688f1"/></svg>
<svg style="left:667px;top:483px;" width="30" height="30" viewBox="0 0 300 300"><rect x="150" y="34" width="146" height="226" fill="#fbfbfb"/><g stroke="#444" stroke-width="9"><path d="M176 62H282M176 96H282M176 130H282M176 164H282M176 198H282M176 232H282"/></g><g stroke="#5a8ad8" stroke-width="9"><path d="M240 62H282M230 130H282M236 198H282"/></g>
<path d="M3 50L172 2V294L3 262z" fill="#2b5cb9"/></svg>
<div style="position:absolute;left:701.6px;top:482px;width:31.2px;height:30px;background:#3b0418;border:1.2px solid #ff4fa2;"></div>
<div style="position:absolute;left:737px;top:482px;width:31px;height:30px;background:#2f1a02;border:1.2px solid #ff8a12;"></div>
<div style="position:absolute;left:777.3px;top:483.6px;width:0.6px;height:29.4px;background:rgba(120,70,10,0.5);"></div>
<svg style="left:789.1px;top:484.0px;" width="27" height="27" viewBox="0 0 270 270"><defs><radialGradient id="glA" cx="0.4" cy="0.35" r="0.7"><stop offset="0" stop-color="#2b9af2"/><stop offset="0.7" stop-color="#1b7ee2"/><stop offset="1" stop-color="#155cc0"/></radialGradient><clipPath id="glC"><circle cx="135" cy="135" r="133"/></clipPath></defs>
<circle cx="135" cy="135" r="133" fill="url(#glA)"/><g clip-path="url(#glC)" fill="#bcdaf6"><path d="M40 40C80 4 140 8 160 34C146 52 150 70 124 84C116 104 134 128 116 140C96 130 84 104 66 92C48 78 34 60 40 40z"/><path d="M128 158C150 140 196 146 214 172C224 196 204 228 186 252C172 268 152 252 152 230C148 206 124 186 128 158z"/></g></svg>
<div style="position:absolute;left:824px;top:491.8px;width:28px;height:14.6px;background:#dedede;border:0.8px solid #f4f4f4;"></div>
<div style="position:absolute;left:826px;top:493.4px;width:3px;height:11.4px;background:#a8a8a8;"></div>
<div style="position:absolute;left:829.6px;top:493.4px;width:4.4px;height:4.8px;background:#7a8a9a;"></div>
<div style="position:absolute;left:835px;top:493.4px;width:3.6px;height:4.4px;background:#3a7ac0;"></div>
<div style="position:absolute;left:840.4px;top:493.2px;width:4px;height:5px;background:#d8d8d8;"></div>
<div style="position:absolute;left:846.4px;top:494px;width:4px;height:6px;background:#4a4a50;"></div>
<div style="position:absolute;left:829.6px;top:499.6px;width:4.4px;height:5px;background:#9aa8b8;"></div>
<div style="position:absolute;left:835px;top:499.6px;width:3.6px;height:5px;background:#b0b8c0;"></div>
<div style="position:absolute;left:840.4px;top:499.6px;width:4px;height:5px;background:#c0c8d0;"></div>
<div style="position:absolute;left:846.4px;top:501px;width:4px;height:3.8px;background:#b8b8b8;"></div>
<svg style="left:860.4px;top:481.6px;" width="26" height="31.4" viewBox="0 0 260 314"><defs><linearGradient id="trA" x1="0" y1="0" x2="1" y2="0"><stop offset="0" stop-color="#d2d5d8"/><stop offset="0.4" stop-color="#f0f2f4"/><stop offset="1" stop-color="#cbcfd3"/></linearGradient></defs>
<path d="M6 42L48 290C52 312 208 312 212 290L254 42z" fill="url(#trA)" opacity="0.93"/><ellipse cx="130" cy="42" rx="124" ry="30" fill="#c4c4c4"/><ellipse cx="130" cy="42" rx="110" ry="22" fill="#8a8a8a"/>
<path d="M40 40L70 14L96 40L120 8L150 38L176 12L216 42C180 62 80 62 40 40z" fill="#ececec"/><circle cx="100" cy="36" r="10" fill="#38b0d8"/><path d="M150 24L176 22L186 48L160 52z" fill="#6a4a3a"/></svg>
<div style="position:absolute;left:1.2px;top:119.5px;width:15.4px;height:0.6px;background:#484848;"></div>
<div style="position:absolute;left:1.2px;top:185.2px;width:15.4px;height:0.6px;background:#484848;"></div>
<div style="position:absolute;left:1.2px;top:230.5px;width:15.4px;height:0.6px;background:#484848;"></div>
<div style="position:absolute;left:1.2px;top:274.7px;width:15.4px;height:0.6px;background:#484848;"></div>
<span style="position:absolute;white-space:pre;line-height:normal;font-family:'DejaVu Sans','Liberation Sans',sans-serif;font-size:17.8px;font-weight:700;color:#06a6be;top:91.20px;transform-origin:0 0;transform:scaleX(0.9575);left:467.70px;-webkit-text-stroke:0.3px #06a6be;">OPENING GALA</span>
<span style="position:absolute;white-space:pre;line-height:normal;font-family:'DejaVu Sans','Liberation Sans',sans-serif;font-size:11px;font-weight:400;color:#e8f6f8;top:94.60px;left:691.90px;font-weight:200;">5</span>
<span style="position:absolute;white-space:pre;line-height:normal;font-family:'Liberation Sans',sans-serif;font-size:7.8px;font-weight:700;color:#f2fbfc;top:127.10px;transform-origin:0 0;transform:scaleX(0.9993);left:488.00px;">Day/Date/Time/location</span>
<span style="position:absolute;white-space:pre;line-height:normal;font-family:'DejaVu Sans','Liberation Sans',sans-serif;font-size:7.45px;font-weight:400;color:#111;top:146.30px;letter-spacing:0.139px;left:470.10px;-webkit-text-stroke:0.07px #111;">Od quam, sitae sincturest, acestius corunt, simaxim usanis</span>
<span style="position:absolute;white-space:pre;line-height:normal;font-family:'DejaVu Sans','Liberation Sans',sans-serif;font-size:7.45px;font-weight:400;color:#111;top:156.33px;letter-spacing:0.177px;left:470.10px;-webkit-text-stroke:0.07px #111;">modisto quis dernam inum aut rest, qui conetur ate net et</span>
<span style="position:absolute;white-space:pre;line-height:normal;font-family:'DejaVu Sans','Liberation Sans',sans-serif;font-size:7.45px;font-weight:400;color:#111;top:166.36px;transform-origin:0 0;transform:scaleX(0.9894);left:470.10px;-webkit-text-stroke:0.07px #111;">atur?</span>
<span style="position:absolute;white-space:pre;line-height:normal;font-family:'DejaVu Sans','Liberation Sans',sans-serif;font-size:7.45px;font-weight:400;color:#111;top:176.39px;letter-spacing:0.174px;left:470.10px;-webkit-text-stroke:0.07px #111;">Ne sint expello rionestibea atur? Quiam, omnimendis es</span>
<span style="position:absolute;white-space:pre;line-height:normal;font-family:'DejaVu Sans','Liberation Sans',sans-serif;font-size:7.45px;font-weight:400;color:#111;top:186.42px;letter-spacing:0.168px;left:470.10px;-webkit-text-stroke:0.07px #111;">doluptio mil mil ilis doloreicia qui voles cupta que quam</span>
<span style="position:absolute;white-space:pre;line-height:normal;font-family:'DejaVu Sans','Liberation Sans',sans-serif;font-size:7.45px;font-weight:400;color:#111;top:196.45px;letter-spacing:0.079px;left:470.10px;-webkit-text-stroke:0.07px #111;">etur apitat.</span>
<span style="position:absolute;white-space:pre;line-height:normal;font-family:'DejaVu Sans','Liberation Sans',sans-serif;font-size:7.45px;font-weight:400;color:#111;top:206.48px;letter-spacing:0.177px;left:470.10px;-webkit-text-stroke:0.07px #111;">Ex ea porat eturemp editae imodissimi, consectiore dolul-</span>
<span style="position:absolute;white-space:pre;line-height:normal;font-family:'DejaVu Sans','Liberation Sans',sans-serif;font-size:7.45px;font-weight:400;color:#111;top:216.51px;letter-spacing:0.240px;left:470.10px;-webkit-text-stroke:0.07px #111;">bus et officatus ex esXimus custorrore lamus acimo incte</span>
<span style="position:absolute;white-space:pre;line-height:normal;font-family:'DejaVu Sans','Liberation Sans',sans-serif;font-size:7.45px;font-weight:400;color:#111;top:226.54px;letter-spacing:0.142px;left:470.10px;-webkit-text-stroke:0.07px #111;">sum alibus, apeliatur, utemquid quo ex et as am facculpa ad</span>
<span style="position:absolute;white-space:pre;line-height:normal;font-family:'DejaVu Sans','Liberation Sans',sans-serif;font-size:7.45px;font-weight:400;color:#111;top:236.57px;letter-spacing:0.178px;left:470.10px;-webkit-text-stroke:0.07px #111;">estrumqui tem hilitis nestiandus magnim sim rent volendi</span>
<span style="position:absolute;white-space:pre;line-height:normal;font-family:'DejaVu Sans','Liberation Sans',sans-serif;font-size:7.45px;font-weight:400;color:#111;top:246.60px;letter-spacing:0.191px;left:470.10px;-webkit-text-stroke:0.07px #111;">psanderia iliquis magnat reprat milissi autendam quo quam</span>
<span style="position:absolute;white-space:pre;line-height:normal;font-family:'DejaVu Sans','Liberation Sans',sans-serif;font-size:7.45px;font-weight:400;color:#111;top:256.63px;letter-spacing:0.166px;left:470.10px;-webkit-text-stroke:0.07px #111;">eum quo te res renist, sunt voluptatio doluptint.</span>
<span style="position:absolute;white-space:pre;line-height:normal;font-family:'DejaVu Sans','Liberation Sans',sans-serif;font-size:7.45px;font-weight:400;color:#111;top:266.66px;letter-spacing:0.195px;left:470.10px;-webkit-text-stroke:0.07px #111;">Nem que doluptat magnam que od qui ilitas aribeaquas</span>
<span style="position:absolute;white-space:pre;line-height:normal;font-family:'DejaVu Sans','Liberation Sans',sans-serif;font-size:7.45px;font-weight:400;color:#111;top:276.69px;letter-spacing:0.286px;left:470.10px;-webkit-text-stroke:0.07px #111;">repe et qui consequam qui rem eturionsequi torrovid qua-</span>
<span style="position:absolute;white-space:pre;line-height:normal;font-family:'DejaVu Sans','Liberation Sans',sans-serif;font-size:7.45px;font-weight:400;color:#111;top:286.72px;letter-spacing:0.214px;left:470.10px;-webkit-text-stroke:0.07px #111;">tem nemporios aut et apeditio. Nemporem alis est, sOrrun-</span>
<span style="position:absolute;white-space:pre;line-height:normal;font-family:'DejaVu Sans','Liberation Sans',sans-serif;font-size:7.45px;font-weight:400;color:#111;top:296.75px;letter-spacing:0.209px;left:470.10px;-webkit-text-stroke:0.07px #111;">tur? Torpore pudicatur suntori ist aliquia quiduci piendae</span>
<span style="position:absolute;white-space:pre;line-height:normal;font-family:'DejaVu Sans','Liberation Sans',sans-serif;font-size:7.45px;font-weight:400;color:#111;top:306.78px;letter-spacing:0.121px;left:470.10px;-webkit-text-stroke:0.07px #111;">nis si alignis quas de sum et explant am, aut recaecepre</span>
<span style="position:absolute;white-space:pre;line-height:normal;font-family:'DejaVu Sans','Liberation Sans',sans-serif;font-size:7.45px;font-weight:400;color:#111;top:316.81px;letter-spacing:0.161px;left:470.10px;-webkit-text-stroke:0.07px #111;">eseque eaquia aut ut harume nes dolupta si nisitiur, nienet</span>
<span style="position:absolute;white-space:pre;line-height:normal;font-family:'DejaVu Sans','Liberation Sans',sans-serif;font-size:7.45px;font-weight:400;color:#111;top:326.84px;letter-spacing:0.143px;left:470.10px;-webkit-text-stroke:0.07px #111;">que vollaccae endae lam, core et omnis dolenihit, cuptiis</span>
<span style="position:absolute;white-space:pre;line-height:normal;font-family:'DejaVu Sans','Liberation Sans',sans-serif;font-size:7.45px;font-weight:400;color:#111;top:336.87px;letter-spacing:0.172px;left:470.10px;-webkit-text-stroke:0.07px #111;">molutate sunt apedila</span>
<span style="position:absolute;white-space:pre;line-height:normal;font-family:'DejaVu Sans','Liberation Sans',sans-serif;font-size:12.6px;font-weight:700;color:#0c0c0c;top:345.00px;transform-origin:0 0;transform:scaleX(0.8968);left:181.90px;-webkit-text-stroke:0.25px #0c0c0c;">TITLE OF MOVIE</span>
<span style="position:absolute;white-space:pre;line-height:normal;font-family:'Liberation Sans',sans-serif;font-size:7.9px;font-weight:400;color:#606060;top:362.70px;transform-origin:0 0;transform:scaleX(0.9364);left:182.00px;">Type of Movie</span>
<span style="position:absolute;white-space:pre;line-height:normal;font-family:'Liberation Sans',sans-serif;font-size:7.8px;font-weight:700;color:#111;top:380.60px;transform-origin:0 0;transform:scaleX(0.9916);left:182.00px;">Writer/Director/Producer</span>
<span style="position:absolute;white-space:pre;line-height:normal;font-family:'Liberation Sans',sans-serif;font-size:7.8px;font-weight:700;color:#111;top:406.20px;transform-origin:0 0;transform:scaleX(0.9026);left:182.00px;">Cast:</span>
<span style="position:absolute;white-space:pre;line-height:normal;font-family:'Liberation Sans',sans-serif;font-size:7.8px;font-weight:700;color:#111;top:439.20px;transform-origin:0 0;transform:scaleX(0.9960);left:182.00px;">Country/age/Duration</span>
<span style="position:absolute;white-space:pre;line-height:normal;font-family:'Liberation Sans',sans-serif;font-size:4.5px;font-weight:400;color:#c4c4c4;top:66.70px;letter-spacing:0.384px;left:35.20px;">50</span>
<span style="position:absolute;white-space:pre;line-height:normal;font-family:'Liberation Sans',sans-serif;font-size:4.5px;font-weight:400;color:#c4c4c4;top:66.70px;letter-spacing:0.384px;left:61.62px;">40</span>
<span style="position:absolute;white-space:pre;line-height:normal;font-family:'Liberation Sans',sans-serif;font-size:4.5px;font-weight:400;color:#c4c4c4;top:66.70px;letter-spacing:0.384px;left:88.04px;">30</span>
<span style="position:absolute;white-space:pre;line-height:normal;font-family:'Liberation Sans',sans-serif;font-size:4.5px;font-weight:400;color:#c4c4c4;top:66.70px;letter-spacing:0.384px;left:114.46px;">20</span>
<span style="position:absolute;white-space:pre;line-height:normal;font-family:'Liberation Sans',sans-serif;font-size:4.5px;font-weight:400;color:#c4c4c4;top:66.70px;letter-spacing:0.384px;left:140.88px;">10</span>
<span style="position:absolute;white-space:pre;line-height:normal;font-family:'Liberation Sans',sans-serif;font-size:4.5px;font-weight:400;color:#c4c4c4;top:66.70px;left:167.30px;">0</span>
<span style="position:absolute;white-space:pre;line-height:normal;font-family:'Liberation Sans',sans-serif;font-size:4.5px;font-weight:400;color:#c4c4c4;top:66.70px;letter-spacing:0.384px;left:193.72px;">10</span>
<span style="position:absolute;white-space:pre;line-height:normal;font-family:'Liberation Sans',sans-serif;font-size:4.5px;font-weight:400;color:#c4c4c4;top:66.70px;letter-spacing:0.384px;left:220.14px;">20</span>
<span style="position:absolute;white-space:pre;line-height:normal;font-family:'Liberation Sans',sans-serif;font-size:4.5px;font-weight:400;color:#c4c4c4;top:66.70px;letter-spacing:0.384px;left:246.56px;">30</span>
<span style="position:absolute;white-space:pre;line-height:normal;font-family:'Liberation Sans',sans-serif;font-size:4.5px;font-weight:400;color:#c4c4c4;top:66.70px;letter-spacing:0.384px;left:272.98px;">40</span>
<span style="position:absolute;white-space:pre;line-height:normal;font-family:'Liberation Sans',sans-serif;font-size:4.5px;font-weight:400;color:#c4c4c4;top:66.70px;letter-spacing:0.384px;left:299.40px;">50</span>
<span style="position:absolute;white-space:pre;line-height:normal;font-family:'Liberation Sans',sans-serif;font-size:4.5px;font-weight:400;color:#c4c4c4;top:66.70px;letter-spacing:0.384px;left:325.82px;">60</span>
<span style="position:absolute;white-space:pre;line-height:normal;font-family:'Liberation Sans',sans-serif;font-size:4.5px;font-weight:400;color:#c4c4c4;top:66.70px;letter-spacing:0.384px;left:352.24px;">70</span>
<span style="position:absolute;white-space:pre;line-height:normal;font-family:'Liberation Sans',sans-serif;font-size:4.5px;font-weight:400;color:#c4c4c4;top:66.70px;letter-spacing:0.384px;left:378.66px;">80</span>
<span style="position:absolute;white-space:pre;line-height:normal;font-family:'Liberation Sans',sans-serif;font-size:4.5px;font-weight:400;color:#c4c4c4;top:66.70px;letter-spacing:0.384px;left:405.08px;">90</span>
<span style="position:absolute;white-space:pre;line-height:normal;font-family:'Liberation Sans',sans-serif;font-size:4.5px;font-weight:400;color:#c4c4c4;top:66.70px;letter-spacing:0.292px;left:431.50px;">100</span>
<span style="position:absolute;white-space:pre;line-height:normal;font-family:'Liberation Sans',sans-serif;font-size:4.5px;font-weight:400;color:#c4c4c4;top:66.70px;letter-spacing:0.456px;left:457.92px;">110</span>
<span style="position:absolute;white-space:pre;line-height:normal;font-family:'Liberation Sans',sans-serif;font-size:4.5px;font-weight:400;color:#c4c4c4;top:66.70px;letter-spacing:0.292px;left:484.34px;">120</span>
<span style="position:absolute;white-space:pre;line-height:normal;font-family:'Liberation Sans',sans-serif;font-size:4.5px;font-weight:400;color:#c4c4c4;top:66.70px;letter-spacing:0.292px;left:510.76px;">130</span>
<span style="position:absolute;white-space:pre;line-height:normal;font-family:'Liberation Sans',sans-serif;font-size:4.5px;font-weight:400;color:#c4c4c4;top:66.70px;letter-spacing:0.292px;left:537.18px;">140</span>
<span style="position:absolute;white-space:pre;line-height:normal;font-family:'Liberation Sans',sans-serif;font-size:4.5px;font-weight:400;color:#c4c4c4;top:66.70px;letter-spacing:0.292px;left:563.60px;">150</span>
<span style="position:absolute;white-space:pre;line-height:normal;font-family:'Liberation Sans',sans-serif;font-size:4.5px;font-weight:400;color:#c4c4c4;top:66.70px;letter-spacing:0.292px;left:590.02px;">160</span>
<span style="position:absolute;white-space:pre;line-height:normal;font-family:'Liberation Sans',sans-serif;font-size:4.5px;font-weight:400;color:#c4c4c4;top:66.70px;letter-spacing:0.292px;left:616.44px;">170</span>
<span style="position:absolute;white-space:pre;line-height:normal;font-family:'Liberation Sans',sans-serif;font-size:4.5px;font-weight:400;color:#c4c4c4;top:66.70px;letter-spacing:0.292px;left:642.86px;">180</span>
<span style="position:absolute;white-space:pre;line-height:normal;font-family:'Liberation Sans',sans-serif;font-size:4.5px;font-weight:400;color:#c4c4c4;top:66.70px;letter-spacing:0.292px;left:669.28px;">190</span>
<span style="position:absolute;white-space:pre;line-height:normal;font-family:'Liberation Sans',sans-serif;font-size:4.5px;font-weight:400;color:#c4c4c4;top:66.70px;letter-spacing:0.292px;left:695.70px;">200</span>
<span style="position:absolute;white-space:pre;line-height:normal;font-family:'Liberation Sans',sans-serif;font-size:4.5px;font-weight:400;color:#c4c4c4;top:66.70px;letter-spacing:0.292px;left:722.12px;">210</span>
<span style="position:absolute;white-space:pre;line-height:normal;font-family:'Liberation Sans',sans-serif;font-size:4.5px;font-weight:400;color:#c4c4c4;top:66.70px;letter-spacing:0.292px;left:748.54px;">220</span>
<span style="position:absolute;white-space:pre;line-height:normal;font-family:'Liberation Sans',sans-serif;font-size:4.5px;font-weight:400;color:#c4c4c4;top:66.70px;letter-spacing:0.292px;left:774.96px;">230</span>
<span style="position:absolute;white-space:pre;line-height:normal;font-family:'Liberation Sans',sans-serif;font-size:4.5px;font-weight:400;color:#c4c4c4;top:66.70px;letter-spacing:0.292px;left:801.38px;">240</span>
<span style="position:absolute;white-space:pre;line-height:normal;font-family:'Liberation Sans',sans-serif;font-size:4.5px;font-weight:400;color:#c4c4c4;top:66.70px;letter-spacing:0.292px;left:827.80px;">250</span>
<span style="position:absolute;white-space:pre;line-height:normal;font-family:'Liberation Sans',sans-serif;font-size:4.5px;font-weight:400;color:#c4c4c4;top:66.70px;letter-spacing:0.292px;left:854.22px;clip-path:inset(0 1.0px 0 0);">260</span>
<span style="position:absolute;white-space:pre;line-height:normal;font-family:'Liberation Sans',sans-serif;font-size:4.6px;font-weight:400;color:#c4c4c4;top:78.60px;left:20.02px;">0</span>
<span style="position:absolute;white-space:pre;line-height:normal;font-family:'Liberation Sans',sans-serif;font-size:4.6px;font-weight:400;color:#c4c4c4;top:105.02px;left:20.02px;">1</span>
<span style="position:absolute;white-space:pre;line-height:normal;font-family:'Liberation Sans',sans-serif;font-size:4.6px;font-weight:400;color:#c4c4c4;top:109.32px;left:20.02px;">0</span>
<span style="position:absolute;white-space:pre;line-height:normal;font-family:'Liberation Sans',sans-serif;font-size:4.6px;font-weight:400;color:#c4c4c4;top:131.44px;left:20.02px;">2</span>
<span style="position:absolute;white-space:pre;line-height:normal;font-family:'Liberation Sans',sans-serif;font-size:4.6px;font-weight:400;color:#c4c4c4;top:135.74px;left:20.02px;">0</span>
<span style="position:absolute;white-space:pre;line-height:normal;font-family:'Liberation Sans',sans-serif;font-size:4.6px;font-weight:400;color:#c4c4c4;top:157.86px;left:20.02px;">3</span>
<span style="position:absolute;white-space:pre;line-height:normal;font-family:'Liberation Sans',sans-serif;font-size:4.6px;font-weight:400;color:#c4c4c4;top:162.16px;left:20.02px;">0</span>
<span style="position:absolute;white-space:pre;line-height:normal;font-family:'Liberation Sans',sans-serif;font-size:4.6px;font-weight:400;color:#c4c4c4;top:184.28px;left:20.02px;">4</span>
<span style="position:absolute;white-space:pre;line-height:normal;font-family:'Liberation Sans',sans-serif;font-size:4.6px;font-weight:400;color:#c4c4c4;top:188.58px;left:20.02px;">0</span>
<span style="position:absolute;white-space:pre;line-height:normal;font-family:'Liberation Sans',sans-serif;font-size:4.6px;font-weight:400;color:#c4c4c4;top:210.70px;left:20.02px;">5</span>
<span style="position:absolute;white-space:pre;line-height:normal;font-family:'Liberation Sans',sans-serif;font-size:4.6px;font-weight:400;color:#c4c4c4;top:215.00px;left:20.02px;">0</span>
<span style="position:absolute;white-space:pre;line-height:normal;font-family:'Liberation Sans',sans-serif;font-size:4.6px;font-weight:400;color:#c4c4c4;top:237.12px;left:20.02px;">6</span>
<span style="position:absolute;white-space:pre;line-height:normal;font-family:'Liberation Sans',sans-serif;font-size:4.6px;font-weight:400;color:#c4c4c4;top:241.42px;left:20.02px;">0</span>
<span style="position:absolute;white-space:pre;line-height:normal;font-family:'Liberation Sans',sans-serif;font-size:4.6px;font-weight:400;color:#c4c4c4;top:263.54px;left:20.02px;">7</span>
<span style="position:absolute;white-space:pre;line-height:normal;font-family:'Liberation Sans',sans-serif;font-size:4.6px;font-weight:400;color:#c4c4c4;top:267.84px;left:20.02px;">0</span>
<span style="position:absolute;white-space:pre;line-height:normal;font-family:'Liberation Sans',sans-serif;font-size:4.6px;font-weight:400;color:#c4c4c4;top:289.96px;left:20.02px;">8</span>
<span style="position:absolute;white-space:pre;line-height:normal;font-family:'Liberation Sans',sans-serif;font-size:4.6px;font-weight:400;color:#c4c4c4;top:294.26px;left:20.02px;">0</span>
<span style="position:absolute;white-space:pre;line-height:normal;font-family:'Liberation Sans',sans-serif;font-size:4.6px;font-weight:400;color:#c4c4c4;top:316.38px;left:20.02px;">9</span>
<span style="position:absolute;white-space:pre;line-height:normal;font-family:'Liberation Sans',sans-serif;font-size:4.6px;font-weight:400;color:#c4c4c4;top:320.68px;left:20.02px;">0</span>
<span style="position:absolute;white-space:pre;line-height:normal;font-family:'Liberation Sans',sans-serif;font-size:4.6px;font-weight:400;color:#c4c4c4;top:342.80px;left:20.02px;">1</span>
<span style="position:absolute;white-space:pre;line-height:normal;font-family:'Liberation Sans',sans-serif;font-size:4.6px;font-weight:400;color:#c4c4c4;top:347.10px;left:20.02px;">0</span>
<span style="position:absolute;white-space:pre;line-height:normal;font-family:'Liberation Sans',sans-serif;font-size:4.6px;font-weight:400;color:#c4c4c4;top:351.40px;left:20.02px;">0</span>
<span style="position:absolute;white-space:pre;line-height:normal;font-family:'Liberation Sans',sans-serif;font-size:4.6px;font-weight:400;color:#c4c4c4;top:369.22px;left:20.02px;">1</span>
<span style="position:absolute;white-space:pre;line-height:normal;font-family:'Liberation Sans',sans-serif;font-size:4.6px;font-weight:400;color:#c4c4c4;top:373.52px;left:20.02px;">1</span>
<span style="position:absolute;white-space:pre;line-height:normal;font-family:'Liberation Sans',sans-serif;font-size:4.6px;font-weight:400;color:#c4c4c4;top:377.82px;left:20.02px;">0</span>
<span style="position:absolute;white-space:pre;line-height:normal;font-family:'Liberation Sans',sans-serif;font-size:4.6px;font-weight:400;color:#c4c4c4;top:395.64px;left:20.02px;">1</span>
<span style="position:absolute;white-space:pre;line-height:normal;font-family:'Liberation Sans',sans-serif;font-size:4.6px;font-weight:400;color:#c4c4c4;top:399.94px;left:20.02px;">2</span>
<span style="position:absolute;white-space:pre;line-height:normal;font-family:'Liberation Sans',sans-serif;font-size:4.6px;font-weight:400;color:#c4c4c4;top:404.24px;left:20.02px;">0</span>
<span style="position:absolute;white-space:pre;line-height:normal;font-family:'Liberation Sans',sans-serif;font-size:4.6px;font-weight:400;color:#c4c4c4;top:422.06px;left:20.02px;">1</span>
<span style="position:absolute;white-space:pre;line-height:normal;font-family:'Liberation Sans',sans-serif;font-size:4.6px;font-weight:400;color:#c4c4c4;top:426.36px;left:20.02px;">3</span>
<span style="position:absolute;white-space:pre;line-height:normal;font-family:'Liberation Sans',sans-serif;font-size:4.6px;font-weight:400;color:#c4c4c4;top:430.66px;left:20.02px;">0</span>
<span style="position:absolute;white-space:pre;line-height:normal;font-family:'Liberation Sans',sans-serif;font-size:4.6px;font-weight:400;color:#c4c4c4;top:448.48px;left:20.02px;">1</span>
<span style="position:absolute;white-space:pre;line-height:normal;font-family:'Liberation Sans',sans-serif;font-size:4.6px;font-weight:400;color:#c4c4c4;top:452.78px;left:20.02px;">4</span>
<span style="position:absolute;white-space:pre;line-height:normal;font-family:'Liberation Sans',sans-serif;font-size:4.6px;font-weight:400;color:#c4c4c4;top:457.08px;left:20.02px;">0</span>
<span style="position:absolute;white-space:pre;line-height:normal;font-family:'Liberation Sans',sans-serif;font-size:6.8px;font-weight:700;color:#1e1e1e;top:1.30px;transform-origin:0 0;transform:scaleX(0.9401);left:24.40px;">InDesign CC</span>
<span style="position:absolute;white-space:pre;line-height:normal;font-family:'Liberation Sans',sans-serif;font-size:6.8px;font-weight:400;color:#1e1e1e;top:1.30px;transform-origin:0 0;transform:scaleX(0.8856);left:70.80px;">File</span>
<span style="position:absolute;white-space:pre;line-height:normal;font-family:'Liberation Sans',sans-serif;font-size:6.8px;font-weight:400;color:#1e1e1e;top:1.30px;transform-origin:0 0;transform:scaleX(0.8960);left:89.50px;">Edit</span>
<span style="position:absolute;white-space:pre;line-height:normal;font-family:'Liberation Sans',sans-serif;font-size:6.8px;font-weight:400;color:#1e1e1e;top:1.30px;transform-origin:0 0;transform:scaleX(0.9402);left:108.80px;">Layout</span>
<span style="position:absolute;white-space:pre;line-height:normal;font-family:'Liberation Sans',sans-serif;font-size:6.8px;font-weight:400;color:#1e1e1e;top:1.30px;transform-origin:0 0;transform:scaleX(0.8814);left:137.00px;">Type</span>
<span style="position:absolute;white-space:pre;line-height:normal;font-family:'Liberation Sans',sans-serif;font-size:6.8px;font-weight:400;color:#1e1e1e;top:1.30px;transform-origin:0 0;transform:scaleX(0.9768);left:158.80px;">Object</span>
<span style="position:absolute;white-space:pre;line-height:normal;font-family:'Liberation Sans',sans-serif;font-size:6.8px;font-weight:400;color:#1e1e1e;top:1.30px;transform-origin:0 0;transform:scaleX(0.8923);left:187.00px;">Table</span>
<span style="position:absolute;white-space:pre;line-height:normal;font-family:'Liberation Sans',sans-serif;font-size:6.8px;font-weight:400;color:#1e1e1e;top:1.30px;transform-origin:0 0;transform:scaleX(0.9241);left:210.80px;">View</span>
<span style="position:absolute;white-space:pre;line-height:normal;font-family:'Liberation Sans',sans-serif;font-size:6.8px;font-weight:400;color:#1e1e1e;top:1.30px;transform-origin:0 0;transform:scaleX(0.9509);left:233.00px;">Window</span>
<span style="position:absolute;white-space:pre;line-height:normal;font-family:'Liberation Sans',sans-serif;font-size:6.8px;font-weight:400;color:#1e1e1e;top:1.30px;transform-origin:0 0;transform:scaleX(0.9296);left:264.80px;">Help</span>
<span style="position:absolute;white-space:pre;line-height:normal;font-family:'Liberation Sans',sans-serif;font-size:6.8px;font-weight:400;color:#1e1e1e;top:1.30px;transform-origin:0 0;transform:scaleX(0.9679);left:842.00px;">Mon 3:55 pm</span>
<span style="position:absolute;white-space:pre;line-height:normal;font-family:'Liberation Sans',sans-serif;font-size:4.6px;font-weight:700;color:#444;top:16.20px;transform-origin:0 0;transform:scaleX(0.9394);left:38.20px;">Br</span>
<span style="position:absolute;white-space:pre;line-height:normal;font-family:'Liberation Sans',sans-serif;font-size:4.6px;font-weight:700;color:#444;top:16.20px;transform-origin:0 0;transform:scaleX(0.9796);left:54.30px;">St</span>
<span style="position:absolute;white-space:pre;line-height:normal;font-family:'Liberation Sans',sans-serif;font-size:6.3px;font-weight:400;color:#f0f0f0;top:14.70px;transform-origin:0 0;transform:scaleX(0.8521);left:68.50px;">137.4%</span>
<span style="position:absolute;white-space:pre;line-height:normal;font-family:'Liberation Sans',sans-serif;font-size:5.8px;font-weight:700;color:#ededed;top:15.30px;transform-origin:0 0;transform:scaleX(0.9617);left:433.80px;">Adobe InDesign CC 2018</span>
<span style="position:absolute;white-space:pre;line-height:normal;font-family:'Liberation Sans',sans-serif;font-size:5.9px;font-weight:700;color:#f4f4f4;top:15.40px;transform-origin:0 0;transform:scaleX(0.9042);left:762.00px;">Publish Online</span>
<span style="position:absolute;white-space:pre;line-height:normal;font-family:'Liberation Sans',sans-serif;font-size:5.9px;font-weight:700;color:#f0f0f0;top:15.40px;transform-origin:0 0;transform:scaleX(0.9603);left:812.00px;">Essentials</span>
<span style="position:absolute;white-space:pre;line-height:normal;font-family:'Liberation Sans',sans-serif;font-size:5.4px;font-weight:400;color:#7d7d7d;top:15.20px;transform-origin:0 0;transform:scaleX(0.8830);left:869.40px;">Adobe Stock</span>
<span style="position:absolute;white-space:pre;line-height:normal;font-family:'Liberation Sans',sans-serif;font-size:5.6px;font-weight:700;color:#f0f0f0;top:30.70px;transform-origin:0 0;transform:scaleX(0.7508);left:29.20px;">X:</span>
<span style="position:absolute;white-space:pre;line-height:normal;font-family:'Liberation Sans',sans-serif;font-size:5.6px;font-weight:700;color:#f0f0f0;top:42.30px;transform-origin:0 0;transform:scaleX(0.8096);left:29.20px;">Y:</span>
<span style="position:absolute;white-space:pre;line-height:normal;font-family:'Liberation Sans',sans-serif;font-size:5.6px;font-weight:400;color:#8a8a8a;top:30.60px;transform-origin:0 0;transform:scaleX(0.9236);left:45.20px;">110.4 mm</span>
<span style="position:absolute;white-space:pre;line-height:normal;font-family:'Liberation Sans',sans-serif;font-size:5.6px;font-weight:400;color:#8a8a8a;top:42.20px;transform-origin:0 0;transform:scaleX(0.8959);left:45.20px;">49.8 mm</span>
<span style="position:absolute;white-space:pre;line-height:normal;font-family:'Liberation Sans',sans-serif;font-size:5.6px;font-weight:700;color:#f0f0f0;top:30.70px;transform-origin:0 0;transform:scaleX(0.7521);left:79.90px;">W:</span>
<span style="position:absolute;white-space:pre;line-height:normal;font-family:'Liberation Sans',sans-serif;font-size:5.6px;font-weight:700;color:#f0f0f0;top:42.30px;transform-origin:0 0;transform:scaleX(0.8127);left:80.40px;">H:</span>
<span style="position:absolute;white-space:pre;line-height:normal;font-family:'Liberation Serif',serif;font-size:12.2px;font-weight:400;color:#7a7a7a;top:31.80px;left:289.91px;">P</span>
<span style="position:absolute;white-space:pre;line-height:normal;font-family:'Liberation Sans',sans-serif;font-size:5.6px;font-weight:700;color:#e8e8e8;top:30.60px;transform-origin:0 0;transform:scaleX(0.8239);left:365.80px;">1 pt</span>
<span style="position:absolute;white-space:pre;line-height:normal;font-family:'Liberation Sans',sans-serif;font-size:6.6px;font-weight:700;color:#cfcfcf;top:29.80px;transform-origin:0 0;transform:scaleX(0.9702);left:428.50px;font-style:italic;">fx</span>
<span style="position:absolute;white-space:pre;line-height:normal;font-family:'Liberation Sans',sans-serif;font-size:5.4px;font-weight:700;color:#e8e8e8;top:42.20px;transform-origin:0 0;transform:scaleX(0.7828);left:411.80px;">100%</span>
<span style="position:absolute;white-space:pre;line-height:normal;font-family:'Liberation Sans',sans-serif;font-size:5.4px;font-weight:700;color:#e0e0e0;top:30.60px;transform-origin:0 0;transform:scaleX(0.9073);left:493.50px;">4.233 mm</span>
<span style="position:absolute;white-space:pre;line-height:normal;font-family:'Liberation Sans',sans-serif;font-size:5.3px;font-weight:700;color:#3c3c3c;top:30.50px;transform-origin:0 0;transform:scaleX(0.8256);left:546.90px;">[Basic Graphics Frame]</span>
<span style="position:absolute;white-space:pre;line-height:normal;font-family:'Liberation Sans',sans-serif;font-size:5.3px;font-weight:700;color:#d2d2d2;top:56.30px;transform-origin:0 0;transform:scaleX(0.8915);left:32.90px;">Final Booklet.indd @ 100% [GPU Preview]</span>
<span style="position:absolute;white-space:pre;line-height:normal;font-family:'Liberation Sans',sans-serif;font-size:5.3px;font-weight:700;color:#f6f6f6;top:56.30px;transform-origin:0 0;transform:scaleX(0.9196);left:148.00px;">*Untitled-1 @ 137% [GPU Preview]</span>
<span style="position:absolute;white-space:pre;line-height:normal;font-family:'Liberation Serif',serif;font-size:10.5px;font-weight:700;color:#dcdcdc;top:120.40px;left:5.09px;">T</span>
<span style="position:absolute;white-space:pre;line-height:normal;font-family:'Liberation Sans',sans-serif;font-size:5.6px;font-weight:700;color:#c4c4c4;top:300.90px;left:10.49px;">T</span>
<span style="position:absolute;white-space:pre;line-height:normal;font-family:'Liberation Sans',sans-serif;font-size:5.7px;font-weight:700;color:#f0f0f0;top:66.20px;transform-origin:0 0;transform:scaleX(0.9066);left:886.00px;">Pages</span>
<span style="position:absolute;white-space:pre;line-height:normal;font-family:'Liberation Sans',sans-serif;font-size:5.7px;font-weight:700;color:#f0f0f0;top:79.00px;transform-origin:0 0;transform:scaleX(0.9049);left:886.00px;">Layers</span>
<span style="position:absolute;white-space:pre;line-height:normal;font-family:'Liberation Sans',sans-serif;font-size:5.7px;font-weight:700;color:#f0f0f0;top:91.30px;transform-origin:0 0;transform:scaleX(0.9152);left:886.00px;">Links</span>
<span style="position:absolute;white-space:pre;line-height:normal;font-family:'Liberation Sans',sans-serif;font-size:5.7px;font-weight:700;color:#f0f0f0;top:109.80px;transform-origin:0 0;transform:scaleX(0.9264);left:886.00px;">Stroke</span>
<span style="position:absolute;white-space:pre;line-height:normal;font-family:'Liberation Sans',sans-serif;font-size:5.7px;font-weight:700;color:#f0f0f0;top:122.60px;transform-origin:0 0;transform:scaleX(0.9275);left:886.00px;">Colour</span>
<span style="position:absolute;white-space:pre;line-height:normal;font-family:'Liberation Sans',sans-serif;font-size:5.7px;font-weight:700;color:#f0f0f0;top:141.00px;transform-origin:0 0;transform:scaleX(0.8914);left:886.00px;">Swatches</span>
<span style="position:absolute;white-space:pre;line-height:normal;font-family:'Liberation Sans',sans-serif;font-size:5.2px;font-weight:700;color:#f0f0f0;top:472.10px;left:44.20px;">1</span>
<span style="position:absolute;white-space:pre;line-height:normal;font-family:'Liberation Sans',sans-serif;font-size:4.9px;font-weight:700;color:#e6e6e6;top:473.00px;transform-origin:0 0;transform:scaleX(0.9020);left:123.00px;">[Basic] (working)</span>
<span style="position:absolute;white-space:pre;line-height:normal;font-family:'Liberation Sans',sans-serif;font-size:4.9px;font-weight:700;color:#e6e6e6;top:473.00px;transform-origin:0 0;transform:scaleX(0.9084);left:187.00px;">No errors</span>
<span style="position:absolute;white-space:pre;line-height:normal;font-family:'Liberation Sans',sans-serif;font-size:5.6px;font-weight:700;color:#fff;top:486.93px;left:254.03px;transform:rotate(-6deg);">JUL</span>
<span style="position:absolute;white-space:pre;line-height:normal;font-family:'Liberation Sans',sans-serif;font-size:15.5px;font-weight:400;color:#484a4e;top:491.68px;left:255.37px;transform:rotate(-6deg);">1</span>
<span style="position:absolute;white-space:pre;line-height:normal;font-family:'Liberation Sans',sans-serif;font-size:4.4px;font-weight:700;color:#6a7a8a;top:501.20px;left:371.59px;">3D</span>
<span style="position:absolute;white-space:pre;line-height:normal;font-family:'Liberation Sans',sans-serif;font-size:6.4px;font-weight:700;color:#fff;top:484.30px;left:584.52px;">1</span>
<span style="position:absolute;white-space:pre;line-height:normal;font-family:'Liberation Sans',sans-serif;font-size:13px;font-weight:700;color:#f2f6fc;top:492.20px;left:669.26px;">W</span>
<span style="position:absolute;white-space:pre;line-height:normal;font-family:'Liberation Sans',sans-serif;font-size:18.6px;font-weight:700;color:#ff5caa;top:485.50px;transform-origin:0 0;transform:scaleX(0.8711);left:709.40px;">Id</span>
<span style="position:absolute;white-space:pre;line-height:normal;font-family:'Liberation Sans',sans-serif;font-size:18.6px;font-weight:700;color:#ff9a1c;top:485.50px;transform-origin:0 0;transform:scaleX(0.8928);left:744.20px;">Ai</span>
</div></body></html>
